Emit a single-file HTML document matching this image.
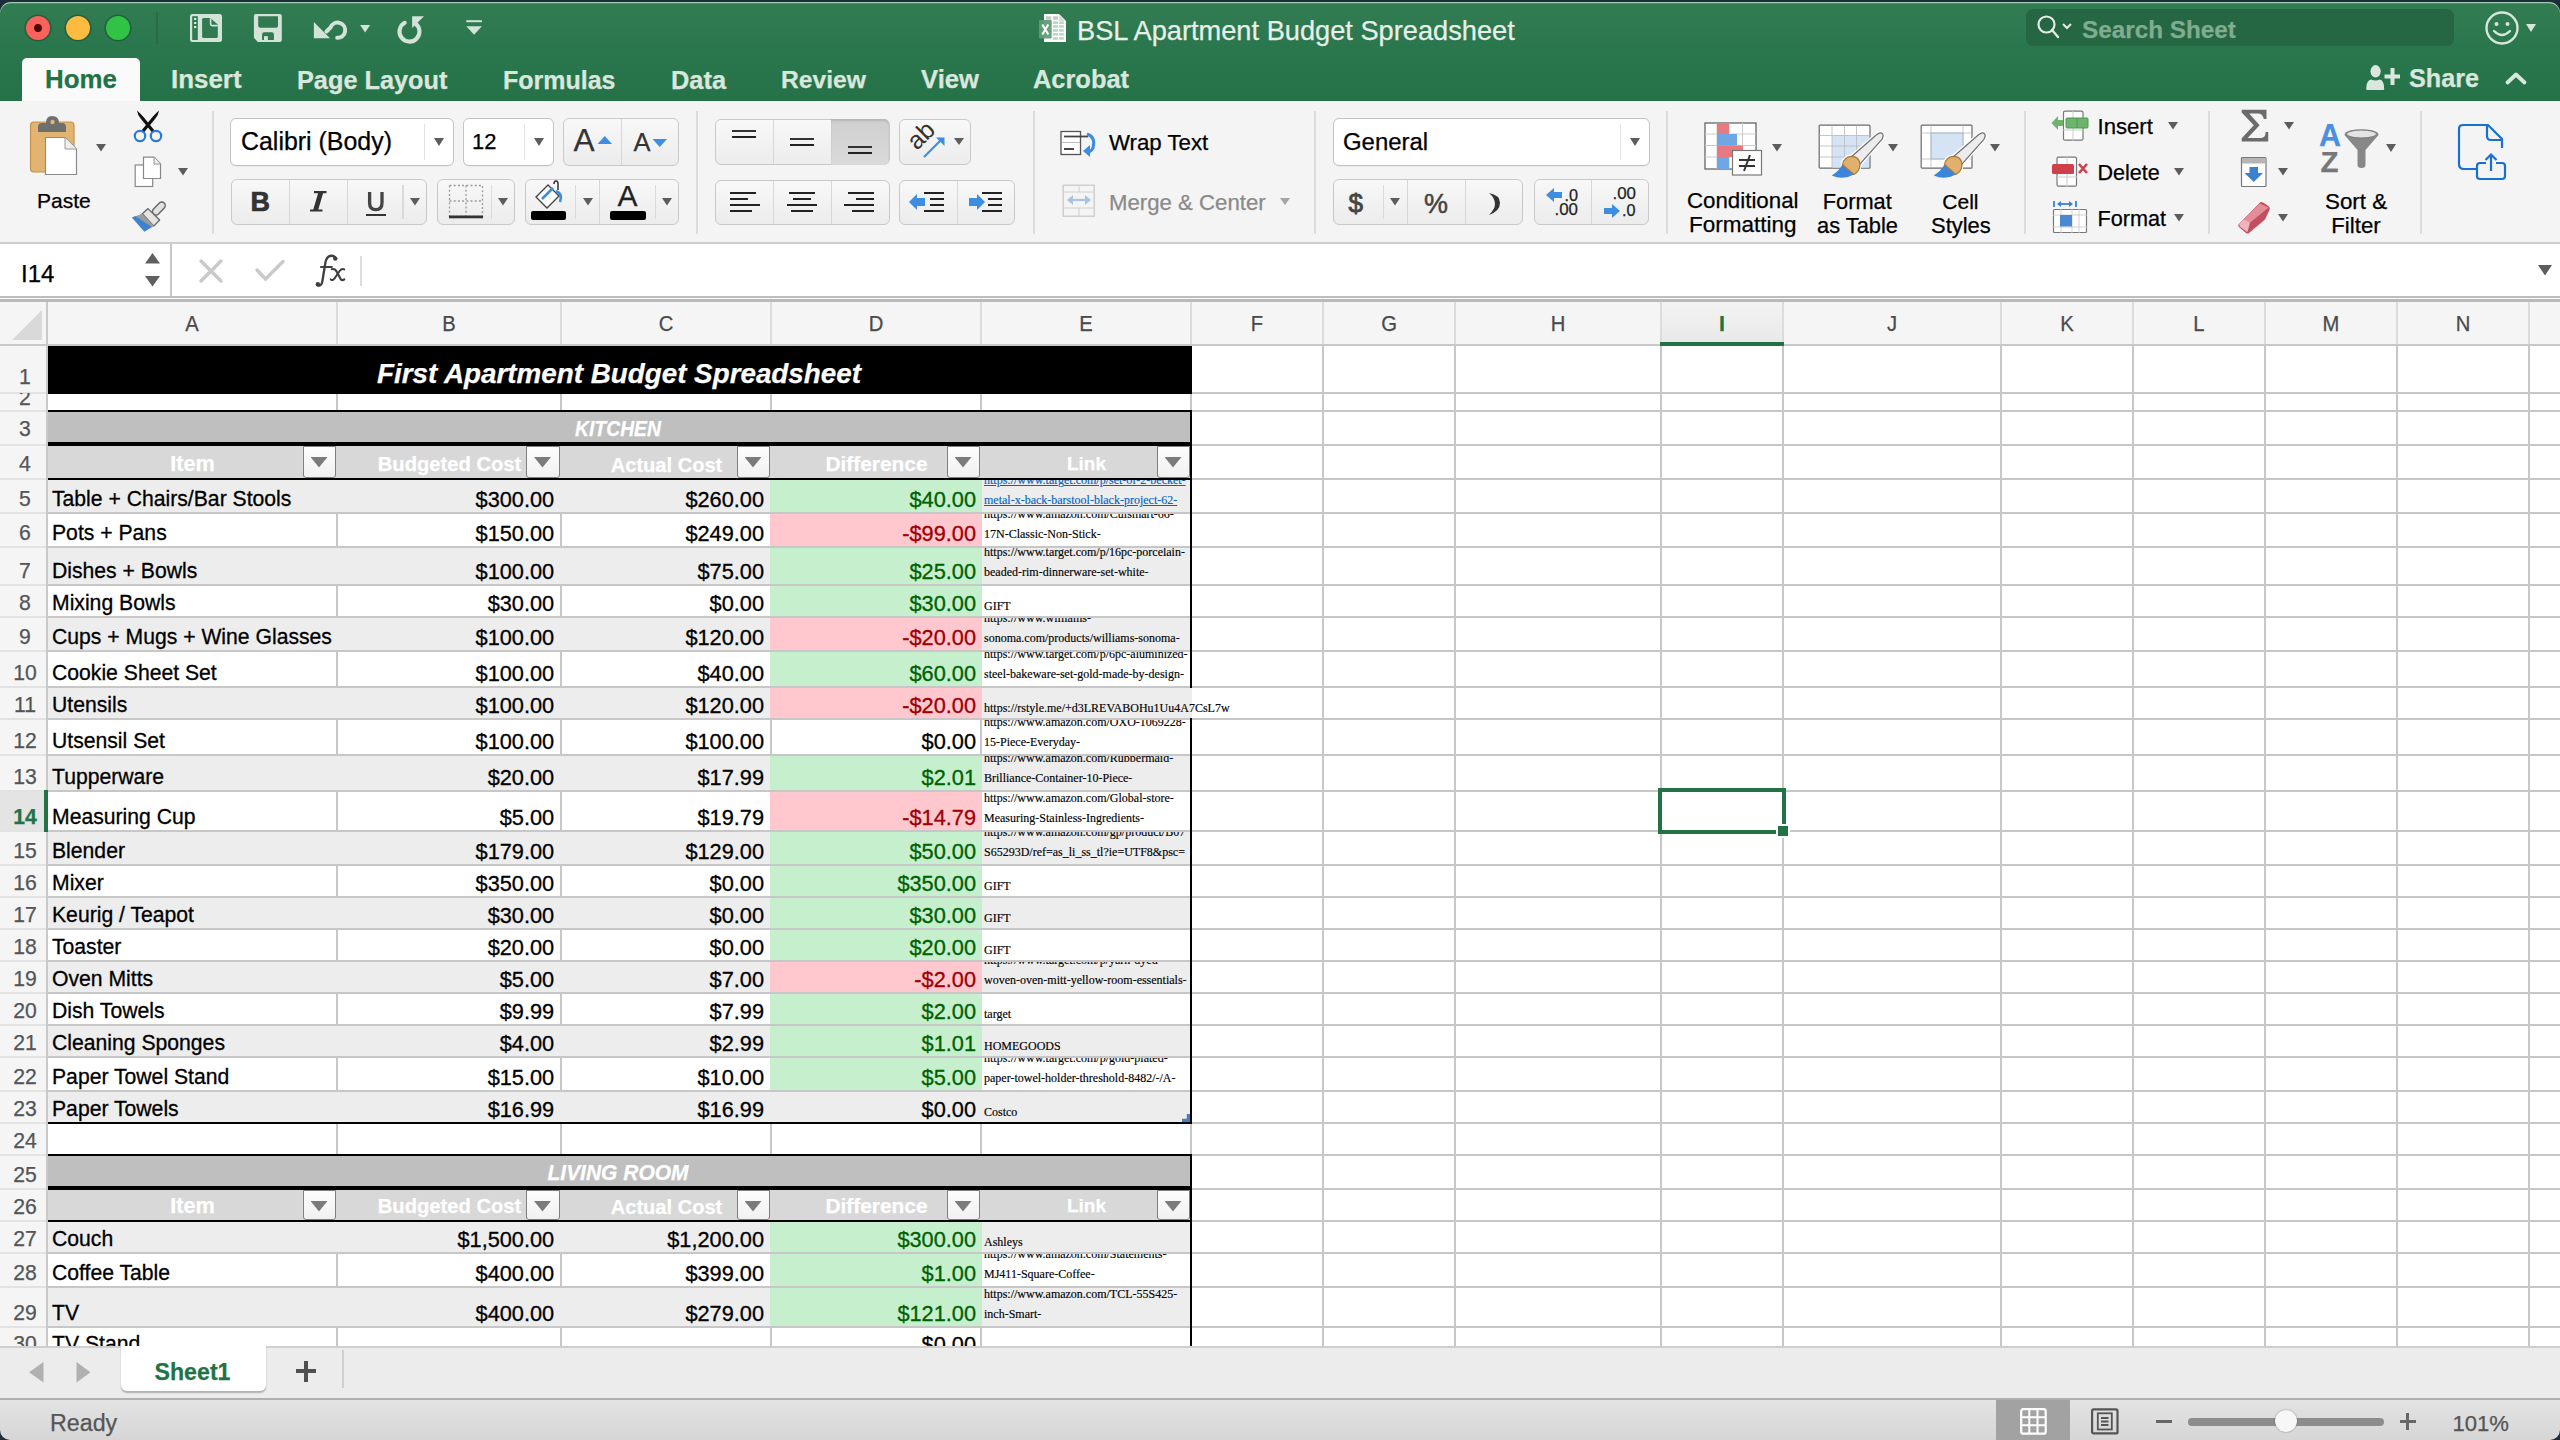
<!DOCTYPE html><html><head><meta charset="utf-8"><style>*{margin:0;padding:0}html,body{width:2560px;height:1440px;overflow:hidden;background:#1c2e3b}
body{position:relative;font-family:"Liberation Sans", sans-serif}
.t{position:absolute;white-space:nowrap;-webkit-text-stroke:0.25px currentColor}
.r{position:absolute}
.s{position:absolute;overflow:visible}</style></head><body><div class="r" style="left:0;top:2px;width:2560px;height:100px;background:linear-gradient(#327c52,#2b774d 45%,#267248);border-radius:11px 11px 0 0;box-shadow:inset 0 1.2px 0 rgba(200,232,212,0.75)"></div><svg class="s" style="left:22.700000000000003px;top:12.8px;" width="30" height="30" viewBox="0 0 30 30"><circle cx="15" cy="15" r="12.8" fill="#fc625c" stroke="#23603f" stroke-width="1.6"/></svg><svg class="s" style="left:62.599999999999994px;top:12.8px;" width="30" height="30" viewBox="0 0 30 30"><circle cx="15" cy="15" r="12.8" fill="#fdbc40" stroke="#23603f" stroke-width="1.6"/></svg><svg class="s" style="left:102.8px;top:12.8px;" width="30" height="30" viewBox="0 0 30 30"><circle cx="15" cy="15" r="12.8" fill="#30c346" stroke="#23603f" stroke-width="1.6"/></svg><svg class="s" style="left:32.7px;top:22.8px;" width="10" height="10" viewBox="0 0 10 10"><circle cx="5" cy="5" r="3.9" fill="#4d0404"/></svg><div class="r" style="left:156px;top:12px;width:2px;height:32px;background:#2a6b45;"></div><svg class="s" style="left:0px;top:0px;" width="520" height="60" viewBox="0 0 520 60"><rect x="190" y="14" width="32" height="28" rx="2.5" fill="#d3e3d8"/><rect x="192.2" y="16.2" width="5.6" height="23.8" fill="#2f7a50"/><rect x="194.2" y="18" width="2" height="2" fill="#fff"/><rect x="194.2" y="22" width="2" height="2" fill="#fff"/><rect x="194.2" y="26" width="2" height="2" fill="#fff"/><path d="M203.5 18.1H210.2L217.8 24.6V36.4Q217.8 37.9 216.3 37.9H203.6Q202.1 37.9 202.1 36.4V19.6Q202.1 18.1 203.5 18.1Z" fill="#2f7a50"/><path d="M210.6 18.3V24Q210.6 25.6 212.2 25.6H217.8" fill="none" stroke="#d3e3d8" stroke-width="1.6"/><path d="M256 14H279.8Q281.8 14 281.8 16V40Q281.8 42 279.8 42H257.8L253.9 37.7V16Q253.9 14 256 14Z" fill="#d3e3d8"/><path d="M258.2 16.2H278V25.8Q278 27.8 276 27.8H260.2Q258.2 27.8 258.2 25.8Z" fill="#2f7a50"/><path d="M262.1 40V34.3Q262.1 32.3 264.1 32.3H271.9Q273.9 32.3 273.9 34.3V40Z" fill="#2f7a50"/><rect x="264" y="36.1" width="3.9" height="3.9" fill="#d3e3d8"/><path d="M313.9 22V38.2H330Z" fill="#d3e3d8"/><path d="M326.5 31.5L330.5 27.5A7.6 7.6 0 1 1 337.2 37.8" fill="none" stroke="#d3e3d8" stroke-width="4" stroke-linecap="round"/><path d="M360.1 25.1H370.2L365.1 32.5Z" fill="#d3e3d8"/><path d="M404.7 22.8A10 10 0 1 0 415.5 23.6" fill="none" stroke="#d3e3d8" stroke-width="4.1" stroke-linecap="round"/><path d="M412.1 16.2H424L412.1 28Z" fill="#d3e3d8"/><rect x="466.3" y="20.2" width="15.6" height="2" fill="#d3e3d8"/><path d="M466.3 26.2H481.9L474.1 34.7Z" fill="#d3e3d8"/></svg><svg class="s" style="left:1038px;top:13px;" width="30" height="31" viewBox="0 0 30 31"><path d="M6 1H21L28 8V29H6Z" fill="#fff"/><path d="M21 1V8H28Z" fill="#dcdcdc"/><rect x="8" y="3.3" width="5.3" height="3.5" fill="#c8c8c8"/><rect x="15" y="3.3" width="5" height="3.5" fill="#c8c8c8"/><rect x="15" y="8.4" width="5" height="2.5" fill="#b3dabb"/><rect x="21.1" y="8.4" width="4.7" height="2.5" fill="#b3dabb"/><rect x="15" y="12.2" width="5" height="2.5" fill="#b3dabb"/><rect x="21.1" y="12.2" width="4.7" height="2.5" fill="#b3dabb"/><rect x="15" y="16.2" width="5" height="2.5" fill="#b3dabb"/><rect x="21.1" y="16.2" width="4.7" height="2.5" fill="#b3dabb"/><rect x="15" y="20.1" width="5" height="2.5" fill="#b3dabb"/><rect x="21.1" y="20.1" width="4.7" height="2.5" fill="#b3dabb"/><rect x="15" y="24.2" width="5" height="2.5" fill="#b3dabb"/><rect x="21.1" y="24.2" width="4.7" height="2.5" fill="#b3dabb"/><rect x="1" y="7" width="12.7" height="18.6" rx="1" fill="#5f9c76" opacity="0.95"/><path d="M4.3 11.5L10.3 21.5M10.3 11.5L4.3 21.5" stroke="#fff" stroke-width="2.1"/></svg><div class="t" style="left:1077px;top:16.95px;font-size:27.23px;line-height:27.23px;color:#e6efe9;">BSL Apartment Budget Spreadsheet</div><div class="r" style="left:2026px;top:9px;width:428px;height:37px;background:#256643;border-radius:7px;"></div><svg class="s" style="left:2036px;top:14px;" width="40" height="26" viewBox="0 0 40 26"><circle cx="10.5" cy="10.5" r="8" fill="none" stroke="#e3ede6" stroke-width="2.2"/><path d="M16 16L22 23" stroke="#e3ede6" stroke-width="2.4" stroke-linecap="round"/><path d="M27 10L31 14L35 10" fill="none" stroke="#e3ede6" stroke-width="2"/></svg><div class="t" style="left:2082px;top:18.42px;font-size:24.31px;line-height:24.31px;color:#80ad90;font-weight:700;">Search Sheet</div><svg class="s" style="left:2484px;top:10px;" width="36" height="36" viewBox="0 0 36 36"><circle cx="18" cy="18" r="15.5" fill="none" stroke="#d6e6db" stroke-width="2.4"/><circle cx="12.5" cy="14" r="2" fill="#d6e6db"/><circle cx="23.5" cy="14" r="2" fill="#d6e6db"/><path d="M10 21Q18 29 26 21" fill="none" stroke="#d6e6db" stroke-width="2.4" stroke-linecap="round"/></svg><svg class="s" style="left:2526.0px;top:24.0px;" width="10" height="8" viewBox="0 0 10 8"><path d="M0 0H10L5.0 8Z" fill="#d6e6db"/></svg><div class="r" style="left:22px;top:58px;width:118px;height:44px;background:#fafafa;border-radius:5px 5px 0 0"></div><div class="t" style="left:45px;top:67.06px;font-size:25.92px;line-height:25.92px;color:#217346;font-weight:700;">Home</div><div class="t" style="left:171px;top:67.05px;font-size:25.93px;line-height:25.93px;color:#d9e7de;font-weight:700;">Insert</div><div class="t" style="left:297px;top:67.58px;font-size:25.31px;line-height:25.31px;color:#d9e7de;font-weight:700;">Page Layout</div><div class="t" style="left:503px;top:67.84px;font-size:25.0px;line-height:25.0px;color:#d9e7de;font-weight:700;">Formulas</div><div class="t" style="left:671px;top:67.52px;font-size:25.38px;line-height:25.38px;color:#d9e7de;font-weight:700;">Data</div><div class="t" style="left:781px;top:68.12px;font-size:24.67px;line-height:24.67px;color:#d9e7de;font-weight:700;">Review</div><div class="t" style="left:921px;top:67.28px;font-size:25.66px;line-height:25.66px;color:#d9e7de;font-weight:700;">View</div><div class="t" style="left:1033px;top:67.49px;font-size:25.41px;line-height:25.41px;color:#d9e7de;font-weight:700;">Acrobat</div><svg class="s" style="left:2364px;top:63px;" width="38" height="28" viewBox="0 0 38 28"><ellipse cx="11.6" cy="8.3" rx="5.1" ry="6.2" fill="#d9e7de"/><path d="M2.2 26Q2.2 17.5 7 16.5Q11.6 18.5 16 16.5Q20.2 17.5 20.2 26Q20.2 26.9 19.2 26.9H3.2Q2.2 26.9 2.2 26Z" fill="#d9e7de"/><path d="M28.5 5V22M20.5 13.4H36" stroke="#d9e7de" stroke-width="4"/></svg><div class="t" style="left:2409px;top:66.18px;font-size:25.19px;line-height:25.19px;color:#d9e7de;font-weight:700;">Share</div><svg class="s" style="left:2504px;top:70px;" width="24" height="16" viewBox="0 0 24 16"><path d="M3.5 12.5L12 4.5L20.5 12.5" fill="none" stroke="#d9e7de" stroke-width="3.8" stroke-linecap="round" stroke-linejoin="round"/></svg><div class="r" style="left:0px;top:101px;width:2560px;height:141px;background:#f4f4f4;"></div><div class="r" style="left:0px;top:242px;width:2560px;height:2px;background:#cdcdcd;"></div><svg class="s" style="left:28px;top:114px;" width="52" height="64" viewBox="0 0 52 64"><rect x="2.5" y="8" width="43.5" height="50" rx="3.5" fill="#e2b472" stroke="#c5914a" stroke-width="1.2"/><path d="M10 18V13Q10 9 14 9H18Q18 2 24 2Q31 2 31 9H34Q38 9 38 13V18Z" fill="#6f6f6f"/><circle cx="24.5" cy="8" r="2.2" fill="#e2b472"/><path d="M17.5 23.5H37L48.5 35V60.5H17.5Z" fill="#fff" stroke="#8b8b8b" stroke-width="1.2"/><path d="M37 23.5V35H48.5" fill="#eee" stroke="#9a9a9a" stroke-width="1"/></svg><svg class="s" style="left:96.0px;top:143.75px;" width="10" height="7.5" viewBox="0 0 10 7.5"><path d="M0 0H10L5.0 7.5Z" fill="#5d5d5d"/></svg><div class="t" style="left:37px;top:189.89px;font-size:21.04px;line-height:21.04px;color:#000;">Paste</div><svg class="s" style="left:132px;top:108px;" width="32" height="36" viewBox="0 0 32 36"><path d="M5 2.5Q5.5 7 9 11L20.5 25L23 23L11.5 9Q8 5 5 2.5Z" fill="#111"/><path d="M27 2.5Q26.5 7 23 11L11.5 25L9 23L20.5 9Q24 5 27 2.5Z" fill="#111"/><circle cx="8" cy="28" r="5.2" fill="#f4f4f4" stroke="#2a7ad6" stroke-width="2.2"/><circle cx="24" cy="28" r="5.2" fill="#f4f4f4" stroke="#2a7ad6" stroke-width="2.2"/></svg><svg class="s" style="left:134px;top:156px;" width="28" height="32" viewBox="0 0 28 32"><rect x="1.2" y="9" width="17.5" height="21.5" fill="#fff" stroke="#888" stroke-width="1.2"/><path d="M9.5 1.2H20L26.5 7.8V22.5H9.5Z" fill="#fff" stroke="#888" stroke-width="1.2"/><path d="M20 1.2V8H26.5" fill="#eee" stroke="#999" stroke-width="1"/></svg><svg class="s" style="left:178.0px;top:167.55px;" width="10" height="7.5" viewBox="0 0 10 7.5"><path d="M0 0H10L5.0 7.5Z" fill="#5d5d5d"/></svg><svg class="s" style="left:0px;top:0px;" width="200" height="240" viewBox="0 0 200 240"><path d="M156 211.5L161.8 205.5" stroke="#6a6a6a" stroke-width="8.4" stroke-linecap="round"/><path d="M156 211.5L161.8 205.5" stroke="#e2e2e2" stroke-width="5.4" stroke-linecap="round"/><path d="M148 208.6L159.6 220L153.8 226.1L142.3 213.8Z" fill="#e4e4e4" stroke="#666" stroke-width="1.3" stroke-linejoin="round"/><path d="M142.3 213.8L153.8 226.1L151.5 227.5L135.5 216.2Z" fill="#9c9c9c"/><path d="M131.8 217.6L135.5 216L152 227L144.4 231.8Z" fill="#3f82d0"/></svg><div class="r" style="left:212px;top:111px;width:2px;height:123px;background:#dcdcdc;"></div><div class="r" style="left:230px;top:118px;width:223.5px;height:47.5px;background:#fff;border:1.5px solid #c3c3c3;box-sizing:border-box;border-radius:6px;box-shadow:0 1px 0 rgba(0,0,0,0.04)"></div><div class="r" style="left:424px;top:124px;width:1px;height:35.5px;background:#e2e2e2;"></div><svg class="s" style="left:434.0px;top:138.0px;" width="10" height="8" viewBox="0 0 10 8"><path d="M0 0H10L5.0 8Z" fill="#5d5d5d"/></svg><div class="t" style="left:241px;top:128.90px;font-size:24.93px;line-height:24.93px;color:#000;">Calibri (Body)</div><div class="r" style="left:462.5px;top:118px;width:91.0px;height:47.5px;background:#fff;border:1.5px solid #c3c3c3;box-sizing:border-box;border-radius:6px;box-shadow:0 1px 0 rgba(0,0,0,0.04)"></div><div class="r" style="left:524px;top:124px;width:1px;height:35.5px;background:#e2e2e2;"></div><svg class="s" style="left:534.0px;top:138.0px;" width="10" height="8" viewBox="0 0 10 8"><path d="M0 0H10L5.0 8Z" fill="#5d5d5d"/></svg><div class="t" style="left:472px;top:131.43px;font-size:21.94px;line-height:21.94px;color:#000;">12</div><div class="r" style="left:563px;top:118px;width:116px;height:47.5px;background:linear-gradient(#f8f8f8,#ececec);border:1.5px solid #c9c9c9;box-sizing:border-box;border-radius:6px"></div><div class="r" style="left:620.5px;top:119px;width:1.5px;height:45.5px;background:#d6d6d6;"></div><div class="t" style="left:573.5px;top:125.23px;font-size:31.63px;line-height:31.63px;color:#333;">A</div><svg class="s" style="left:597px;top:135px;" width="16" height="10" viewBox="0 0 16 10"><path d="M0.5 9H15L7.75 1Z" fill="#3d8ee0"/></svg><div class="t" style="left:633.5px;top:129.92px;font-size:25.49px;line-height:25.49px;color:#333;">A</div><svg class="s" style="left:652px;top:138px;" width="16" height="10" viewBox="0 0 16 10"><path d="M0.5 1H15L7.75 9Z" fill="#3d8ee0"/></svg><div class="r" style="left:231px;top:179px;width:196px;height:46px;background:linear-gradient(#f8f8f8,#ececec);border:1.5px solid #c9c9c9;box-sizing:border-box;border-radius:6px"></div><div class="r" style="left:288.5px;top:180px;width:1.5px;height:44px;background:#d6d6d6;"></div><div class="r" style="left:346.5px;top:180px;width:1.5px;height:44px;background:#d6d6d6;"></div><div class="r" style="left:402.0px;top:185px;width:1.5px;height:34px;background:#dadada;"></div><div class="t" style="left:250.5px;top:188.94px;font-size:27px;line-height:27px;color:#333;font-weight:700;-webkit-text-stroke:0.7px #333;">B</div><svg class="s" style="left:300px;top:185px;" width="30" height="30" viewBox="0 0 30 30"><path d="M14 7.2H26.5M10 25.5H22.5" stroke="#333" stroke-width="2.2" fill="none"/><path d="M18.3 7.5H23.3L18 25.5H13Z" fill="#333"/></svg><svg class="s" style="left:360px;top:185px;" width="30" height="30" viewBox="0 0 30 30"><path d="M9.6 7V18Q9.6 24.6 15.8 24.6Q22 24.6 22 18V7" stroke="#444" stroke-width="3.3" fill="none"/></svg><div class="r" style="left:366px;top:213.7px;width:20px;height:2.1000000000000227px;background:#333;"></div><svg class="s" style="left:410.0px;top:197.75px;" width="10" height="7.5" viewBox="0 0 10 7.5"><path d="M0 0H10L5.0 7.5Z" fill="#5d5d5d"/></svg><div class="r" style="left:437px;top:179px;width:78px;height:46px;background:linear-gradient(#f8f8f8,#ececec);border:1.5px solid #c9c9c9;box-sizing:border-box;border-radius:6px"></div><div class="r" style="left:490.5px;top:185px;width:1.5px;height:34px;background:#dadada;"></div><svg class="s" style="left:448px;top:184px;" width="36" height="36" viewBox="0 0 36 36"><g stroke="#9a9a9a" stroke-width="1.3" stroke-dasharray="2 2.2" fill="none"><rect x="1.5" y="1.5" width="33" height="31"/><path d="M18 1.5V32M1.5 17H34.5"/></g><rect x="1" y="31.5" width="34" height="2.8" fill="#333"/></svg><svg class="s" style="left:498.0px;top:197.75px;" width="10" height="7.5" viewBox="0 0 10 7.5"><path d="M0 0H10L5.0 7.5Z" fill="#5d5d5d"/></svg><div class="r" style="left:525px;top:179px;width:154px;height:46px;background:linear-gradient(#f8f8f8,#ececec);border:1.5px solid #c9c9c9;box-sizing:border-box;border-radius:6px"></div><div class="r" style="left:598.5px;top:180px;width:1.5px;height:44px;background:#d6d6d6;"></div><div class="r" style="left:574.5px;top:185px;width:1.5px;height:34px;background:#dadada;"></div><div class="r" style="left:654.5px;top:185px;width:1.5px;height:34px;background:#dadada;"></div><svg class="s" style="left:532px;top:180px;" width="32" height="30" viewBox="0 0 32 30"><path d="M22 4Q22 1 24 1Q26 1 26 4V10" fill="none" stroke="#333" stroke-width="1.5"/><path d="M4 17L16 5L27 16L15 28Z" fill="#fff" stroke="#444" stroke-width="1.4"/><path d="M10 19L21 8" stroke="#3d8ee0" stroke-width="2.6"/><path d="M24 11Q31 14 28 22" fill="none" stroke="#3d8ee0" stroke-width="2.6"/></svg><div class="r" style="left:530.5px;top:210.5px;width:35.5px;height:9.300000000000011px;background:#000;border-radius:2px;"></div><svg class="s" style="left:582.5px;top:197.75px;" width="10" height="7.5" viewBox="0 0 10 7.5"><path d="M0 0H10L5.0 7.5Z" fill="#5d5d5d"/></svg><div class="t" style="left:617.5px;top:180.62px;font-size:29.98px;line-height:29.98px;color:#222;">A</div><div class="r" style="left:610px;top:210.5px;width:36px;height:9.300000000000011px;background:#000;border-radius:2px;"></div><svg class="s" style="left:662.0px;top:197.75px;" width="10" height="7.5" viewBox="0 0 10 7.5"><path d="M0 0H10L5.0 7.5Z" fill="#5d5d5d"/></svg><div class="r" style="left:696px;top:111px;width:2px;height:123px;background:#dcdcdc;"></div><div class="r" style="left:715px;top:118.5px;width:174.5px;height:46.5px;background:linear-gradient(#f8f8f8,#ececec);border:1.5px solid #c9c9c9;box-sizing:border-box;border-radius:6px"></div><div class="r" style="left:772.5px;top:119.5px;width:1.5px;height:44.5px;background:#d6d6d6;"></div><div class="r" style="left:830.5px;top:119.5px;width:1.5px;height:44.5px;background:#d6d6d6;"></div><div class="r" style="left:831px;top:119px;width:58px;height:45.5px;background:linear-gradient(#cfcfcf,#dadada);border-radius:0 5px 5px 0;box-shadow:inset 0 2px 2px rgba(0,0,0,0.12)"></div><div class="r" style="left:732px;top:130px;width:24px;height:2px;background:#333;"></div><div class="r" style="left:732px;top:136px;width:24px;height:2px;background:#222;"></div><div class="r" style="left:790px;top:138px;width:24px;height:2px;background:#333;"></div><div class="r" style="left:790px;top:144px;width:24px;height:2px;background:#222;"></div><div class="r" style="left:848px;top:145.5px;width:24px;height:2.0px;background:#333;"></div><div class="r" style="left:848px;top:151.5px;width:24px;height:2.0px;background:#222;"></div><div class="r" style="left:899px;top:118.5px;width:71.5px;height:46.5px;background:linear-gradient(#f8f8f8,#ececec);border:1.5px solid #c9c9c9;box-sizing:border-box;border-radius:6px"></div><svg class="s" style="left:906px;top:122px;" width="56" height="40" viewBox="0 0 56 40"><text x="0" y="0" transform="translate(11,29) rotate(-45)" font-family="Liberation Sans" font-size="25" fill="#333">ab</text><path d="M18 35L36 17" stroke="#3d8ee0" stroke-width="2.2"/><path d="M30 15.5H38.5V24Z" fill="#3d8ee0"/></svg><svg class="s" style="left:953.8px;top:138.0px;" width="10" height="7" viewBox="0 0 10 7"><path d="M0 0H10L5.0 7Z" fill="#5d5d5d"/></svg><div class="r" style="left:715px;top:179.5px;width:174.5px;height:45.0px;background:linear-gradient(#f8f8f8,#ececec);border:1.5px solid #c9c9c9;box-sizing:border-box;border-radius:6px"></div><div class="r" style="left:772.5px;top:180.5px;width:1.5px;height:43.0px;background:#d6d6d6;"></div><div class="r" style="left:830.5px;top:180.5px;width:1.5px;height:43.0px;background:#d6d6d6;"></div><div class="r" style="left:730px;top:192px;width:26px;height:2px;background:#222;"></div><div class="r" style="left:789.0px;top:192px;width:26.0px;height:2px;background:#222;"></div><div class="r" style="left:848px;top:192px;width:26px;height:2px;background:#222;"></div><div class="r" style="left:730px;top:198px;width:18px;height:2px;background:#222;"></div><div class="r" style="left:793.0px;top:198px;width:18.0px;height:2px;background:#222;"></div><div class="r" style="left:856px;top:198px;width:18px;height:2px;background:#222;"></div><div class="r" style="left:730px;top:204px;width:30px;height:2px;background:#222;"></div><div class="r" style="left:787.0px;top:204px;width:30.0px;height:2px;background:#222;"></div><div class="r" style="left:844px;top:204px;width:30px;height:2px;background:#222;"></div><div class="r" style="left:730px;top:210px;width:22px;height:2px;background:#222;"></div><div class="r" style="left:791.0px;top:210px;width:22.0px;height:2px;background:#222;"></div><div class="r" style="left:852px;top:210px;width:22px;height:2px;background:#222;"></div><div class="r" style="left:899px;top:179.5px;width:115.5px;height:45.0px;background:linear-gradient(#f8f8f8,#ececec);border:1.5px solid #c9c9c9;box-sizing:border-box;border-radius:6px"></div><div class="r" style="left:956.5px;top:180.5px;width:1.5px;height:43.0px;background:#d6d6d6;"></div><svg class="s" style="left:908px;top:192px;" width="20" height="20" viewBox="0 0 20 20"><path d="M1 9L9 1V5H17V13H9V17Z" fill="#3d8ee0" transform="translate(0,1)"/></svg><svg class="s" style="left:966px;top:192px;" width="20" height="20" viewBox="0 0 20 20"><path d="M19 9L11 1V5H3V13H11V17Z" fill="#3d8ee0" transform="translate(0,1)"/></svg><div class="r" style="left:924px;top:192px;width:20px;height:2px;background:#222;"></div><div class="r" style="left:982px;top:192px;width:20px;height:2px;background:#222;"></div><div class="r" style="left:930px;top:198px;width:14px;height:2px;background:#222;"></div><div class="r" style="left:988px;top:198px;width:14px;height:2px;background:#222;"></div><div class="r" style="left:930px;top:204px;width:14px;height:2px;background:#222;"></div><div class="r" style="left:988px;top:204px;width:14px;height:2px;background:#222;"></div><div class="r" style="left:924px;top:210px;width:20px;height:2px;background:#222;"></div><div class="r" style="left:982px;top:210px;width:20px;height:2px;background:#222;"></div><div class="r" style="left:1033px;top:111px;width:2px;height:123px;background:#dcdcdc;"></div><svg class="s" style="left:1060px;top:129px;" width="42" height="29" viewBox="0 0 42 29"><rect x="1" y="2.5" width="19.5" height="23" fill="#fff" stroke="#555" stroke-width="1.3"/><path d="M4 7.5H28" stroke="#444" stroke-width="1.8"/><path d="M2 13.5H20" stroke="#bbb" stroke-width="1"/><path d="M4 20H14" stroke="#333" stroke-width="1.8"/><path d="M27 5Q36 8 33 19Q31 23 27 23" fill="none" stroke="#3d8ee0" stroke-width="3"/><path d="M23 22L30 16V28Z" fill="#3d8ee0"/></svg><div class="t" style="left:1109px;top:132.17px;font-size:22.24px;line-height:22.24px;color:#000;">Wrap Text</div><svg class="s" style="left:1062px;top:184px;" width="34" height="34" viewBox="0 0 34 34"><rect x="1.2" y="1.2" width="31" height="31" fill="none" stroke="#c6c6c6" stroke-width="1.2"/><path d="M1 8H32M1 24H32M17 1V8M17 24V33" stroke="#d0d0d0" stroke-width="1"/><path d="M6 16H28" stroke="#a9c3e3" stroke-width="2.2"/><path d="M5 16L11 11V21ZM29 16L23 11V21Z" fill="#a9c3e3"/></svg><div class="t" style="left:1109px;top:192.22px;font-size:22.19px;line-height:22.19px;color:#8a8a8a;">Merge &amp; Center</div><svg class="s" style="left:1280.0px;top:198.3px;" width="10" height="7" viewBox="0 0 10 7"><path d="M0 0H10L5.0 7Z" fill="#a6a6a6"/></svg><div class="r" style="left:1314px;top:111px;width:2px;height:123px;background:#dcdcdc;"></div><div class="r" style="left:1332.5px;top:118px;width:317.0px;height:47.5px;background:#fff;border:1.5px solid #c3c3c3;box-sizing:border-box;border-radius:6px;box-shadow:0 1px 0 rgba(0,0,0,0.04)"></div><div class="r" style="left:1620px;top:124px;width:1px;height:35.5px;background:#e2e2e2;"></div><svg class="s" style="left:1630.0px;top:138.0px;" width="10" height="8" viewBox="0 0 10 8"><path d="M0 0H10L5.0 8Z" fill="#5d5d5d"/></svg><div class="t" style="left:1343px;top:130.03px;font-size:23.95px;line-height:23.95px;color:#000;">General</div><div class="r" style="left:1333px;top:179px;width:189.5px;height:46px;background:linear-gradient(#f8f8f8,#ececec);border:1.5px solid #c9c9c9;box-sizing:border-box;border-radius:6px"></div><div class="r" style="left:1406.5px;top:180px;width:1.5px;height:44px;background:#d6d6d6;"></div><div class="r" style="left:1464.5px;top:180px;width:1.5px;height:44px;background:#d6d6d6;"></div><div class="r" style="left:1382.5px;top:185px;width:1.5px;height:34px;background:#dadada;"></div><div class="t" style="left:1348.5px;top:190.43px;font-size:26.07px;line-height:26.07px;color:#444;-webkit-text-stroke:0.8px #444;">$</div><svg class="s" style="left:1390.0px;top:197.95px;" width="10" height="7.5" viewBox="0 0 10 7.5"><path d="M0 0H10L5.0 7.5Z" fill="#5d5d5d"/></svg><div class="t" style="left:1424px;top:190.65px;font-size:26.99px;line-height:26.99px;color:#444;-webkit-text-stroke:0.5px #444;">%</div><svg class="s" style="left:1485px;top:191px;" width="18" height="25" viewBox="0 0 18 25"><path d="M4 2Q15 4 15 12Q15 20 4 24Q10 18 10 13Q10 7 4 2Z" fill="#333"/></svg><div class="r" style="left:1533.5px;top:179px;width:115.5px;height:46px;background:linear-gradient(#f8f8f8,#ececec);border:1.5px solid #c9c9c9;box-sizing:border-box;border-radius:6px"></div><div class="r" style="left:1590.5px;top:180px;width:1.5px;height:44px;background:#d6d6d6;"></div><svg class="s" style="left:1545px;top:187px;" width="18" height="16" viewBox="0 0 18 16"><path d="M1 8L9 1V5H17V11H9V15Z" fill="#3d8ee0"/></svg><div class="t" style="left:1564.5px;top:186.80px;font-size:16.19px;line-height:16.19px;color:#222;">.0</div><div class="t" style="left:1554.5px;top:201.69px;font-size:16.91px;line-height:16.91px;color:#222;">.00</div><div class="t" style="left:1612.5px;top:186.19px;font-size:16.91px;line-height:16.91px;color:#222;">.00</div><svg class="s" style="left:1603px;top:203px;" width="18" height="16" viewBox="0 0 18 16"><path d="M17 8L9 1V5H1V11H9V15Z" fill="#3d8ee0"/></svg><div class="t" style="left:1622px;top:202.30px;font-size:16.19px;line-height:16.19px;color:#222;">.0</div><div class="r" style="left:1666px;top:111px;width:2px;height:123px;background:#dcdcdc;"></div><svg class="s" style="left:1704px;top:122px;" width="60" height="56" viewBox="0 0 60 56"><rect x="1" y="1" width="51" height="46" fill="#fff" stroke="#666" stroke-width="1.3"/><path d="M13 1V47" stroke="#ccc" stroke-width="1"/><path d="M25 1V47" stroke="#ccc" stroke-width="1"/><path d="M38.5 1V47" stroke="#ccc" stroke-width="1"/><path d="M1 12H52" stroke="#ccc" stroke-width="1"/><path d="M1 23.5H52" stroke="#ccc" stroke-width="1"/><path d="M1 35H52" stroke="#ccc" stroke-width="1"/><rect x="13" y="1" width="12" height="11" fill="#e8797e"/><rect x="13" y="12" width="20" height="11.5" fill="#6ea6e6"/><rect x="13" y="23.5" width="26" height="11.5" fill="#e8797e"/><rect x="13" y="35" width="12" height="12" fill="#6ea6e6"/><rect x="28.5" y="28.5" width="29" height="24.5" fill="#fff" stroke="#777" stroke-width="1.2"/><path d="M35 38H51M35 44H51M46 33L40 49" stroke="#333" stroke-width="2"/></svg><svg class="s" style="left:1772.0px;top:143.95px;" width="10" height="7.5" viewBox="0 0 10 7.5"><path d="M0 0H10L5.0 7.5Z" fill="#5d5d5d"/></svg><div class="t" style="left:1687px;top:190.13px;font-size:22.29px;line-height:22.29px;color:#000;">Conditional</div><div class="t" style="left:1689px;top:214.46px;font-size:22.49px;line-height:22.49px;color:#000;">Formatting</div><svg class="s" style="left:1818px;top:124px;" width="70" height="62" viewBox="0 0 70 62"><rect x="1.2" y="1.2" width="50.8" height="43" rx="1" fill="#fff" stroke="#6a6a6a" stroke-width="1.2"/><rect x="14" y="11.5" width="37" height="32" fill="#d5e4f5"/><path d="M14 1.5V44" stroke="#b9b9b9" stroke-width="0.8"/><path d="M26.5 1.5V44" stroke="#b9b9b9" stroke-width="0.8"/><path d="M38.5 1.5V44" stroke="#b9b9b9" stroke-width="0.8"/><path d="M1.5 11.5H52" stroke="#b9b9b9" stroke-width="0.8"/><path d="M1.5 22H52" stroke="#b9b9b9" stroke-width="0.8"/><path d="M1.5 33H52" stroke="#b9b9b9" stroke-width="0.8"/><path d="M28.8 36.7L58.5 10.8Q62.5 7.5 64.6 9.8Q66 12.5 63.5 15.8L37.2 45.3Z" fill="#fff" stroke="#fff" stroke-width="4"/><circle cx="33.1" cy="41.1" r="10.5" fill="#fff"/><path d="M28.8 36.7L58.5 10.8Q62.5 7.5 64.6 9.8Q66 12.5 63.5 15.8L37.2 45.3Z" fill="#ececec" stroke="#6f6f6f" stroke-width="1.2"/><path d="M13.7 51.5Q21 47 24.5 40.5L36 50.5Q25 56.5 13.7 51.5Z" fill="#3b85dc"/><path d="M24.5 40.5Q26 33 33 32.3Q41.9 32.3 41.9 41Q41.9 47 36 50.5Z" fill="#dfb06e" stroke="#a87a3e" stroke-width="1.2"/></svg><svg class="s" style="left:1888.0px;top:143.95px;" width="10" height="7.5" viewBox="0 0 10 7.5"><path d="M0 0H10L5.0 7.5Z" fill="#5d5d5d"/></svg><div class="t" style="left:1822.8px;top:190.55px;font-size:21.79px;line-height:21.79px;color:#000;">Format</div><div class="t" style="left:1817px;top:215.00px;font-size:21.85px;line-height:21.85px;color:#000;">as Table</div><svg class="s" style="left:1920px;top:124px;" width="70" height="62" viewBox="0 0 70 62"><rect x="1.2" y="1.2" width="50.8" height="43" rx="1" fill="#fff" stroke="#6a6a6a" stroke-width="1.2"/><rect x="11" y="9" width="32" height="26" fill="#d5e4f5" stroke="#aac4e8" stroke-width="1"/><path d="M11 1.5V44" stroke="#b9b9b9" stroke-width="0.8"/><path d="M43 1.5V44" stroke="#b9b9b9" stroke-width="0.8"/><path d="M1.5 9H52" stroke="#b9b9b9" stroke-width="0.8"/><path d="M1.5 35H52" stroke="#b9b9b9" stroke-width="0.8"/><path d="M28.8 36.7L58.5 10.8Q62.5 7.5 64.6 9.8Q66 12.5 63.5 15.8L37.2 45.3Z" fill="#fff" stroke="#fff" stroke-width="4"/><circle cx="33.1" cy="41.1" r="10.5" fill="#fff"/><path d="M28.8 36.7L58.5 10.8Q62.5 7.5 64.6 9.8Q66 12.5 63.5 15.8L37.2 45.3Z" fill="#ececec" stroke="#6f6f6f" stroke-width="1.2"/><path d="M13.7 51.5Q21 47 24.5 40.5L36 50.5Q25 56.5 13.7 51.5Z" fill="#3b85dc"/><path d="M24.5 40.5Q26 33 33 32.3Q41.9 32.3 41.9 41Q41.9 47 36 50.5Z" fill="#dfb06e" stroke="#a87a3e" stroke-width="1.2"/></svg><svg class="s" style="left:1990.0px;top:143.95px;" width="10" height="7.5" viewBox="0 0 10 7.5"><path d="M0 0H10L5.0 7.5Z" fill="#5d5d5d"/></svg><div class="t" style="left:1942.3px;top:191.22px;font-size:21.01px;line-height:21.01px;color:#000;">Cell</div><div class="t" style="left:1931px;top:214.91px;font-size:21.96px;line-height:21.96px;color:#000;">Styles</div><div class="r" style="left:2024px;top:111px;width:2px;height:123px;background:#dcdcdc;"></div><svg class="s" style="left:2050px;top:110px;" width="40" height="32" viewBox="0 0 40 32"><rect x="13.5" y="1.2" width="19.5" height="29" rx="1.5" fill="#fff" stroke="#777" stroke-width="1.2"/><path d="M23 1V31M13 20H33" stroke="#ccc" stroke-width="1"/><rect x="16" y="8" width="22" height="10" rx="1" fill="#6db46f" stroke="#4e9a51" stroke-width="1"/><path d="M27 8V18" stroke="#4e9a51" stroke-width="1"/><path d="M1.5 13L8 6V10H13V16H8V20Z" fill="#6db46f"/></svg><div class="t" style="left:2097.5px;top:115.75px;font-size:22.15px;line-height:22.15px;color:#000;">Insert</div><svg class="s" style="left:2168.0px;top:121.75px;" width="10" height="7.5" viewBox="0 0 10 7.5"><path d="M0 0H10L5.0 7.5Z" fill="#5d5d5d"/></svg><svg class="s" style="left:2050px;top:156px;" width="40" height="32" viewBox="0 0 40 32"><rect x="7" y="1.2" width="19.5" height="29" rx="1.5" fill="#fff" stroke="#777" stroke-width="1.2"/><path d="M17 1V31M7 21H27" stroke="#ccc" stroke-width="1"/><rect x="2" y="8" width="22" height="10" rx="1.5" fill="#d0404a"/><path d="M29 8L37 17M37 8L29 17" stroke="#d0404a" stroke-width="2.6"/></svg><div class="t" style="left:2097.5px;top:163.28px;font-size:21.52px;line-height:21.52px;color:#000;">Delete</div><svg class="s" style="left:2174.0px;top:167.75px;" width="10" height="7.5" viewBox="0 0 10 7.5"><path d="M0 0H10L5.0 7.5Z" fill="#5d5d5d"/></svg><svg class="s" style="left:2052px;top:199px;" width="38" height="36" viewBox="0 0 38 36"><path d="M2 2V8M24 2V8" stroke="#3d7fd0" stroke-width="1.8"/><path d="M6 5H20" stroke="#3d7fd0" stroke-width="1.8"/><path d="M5 5L9 2V8ZM21 5L17 2V8Z" fill="#3d7fd0"/><rect x="1.5" y="10.5" width="33" height="23" rx="1" fill="#fff" stroke="#777" stroke-width="1.2"/><path d="M9 10V34M20 10V34M27 10V34M1 16H35M1 28H35" stroke="#ccc" stroke-width="0.9"/><rect x="8" y="16" width="12" height="11.5" fill="#4a88d4"/></svg><div class="t" style="left:2097.5px;top:208.19px;font-size:21.63px;line-height:21.63px;color:#000;">Format</div><svg class="s" style="left:2174.0px;top:214.25px;" width="10" height="7.5" viewBox="0 0 10 7.5"><path d="M0 0H10L5.0 7.5Z" fill="#5d5d5d"/></svg><div class="r" style="left:2208px;top:111px;width:2px;height:123px;background:#dcdcdc;"></div><svg class="s" style="left:0px;top:0px;" width="2300" height="240" viewBox="0 0 2300 240"><path d="M2241.7 109.7H2266.5V119H2263.8Q2262.8 113.4 2258 113.4H2249.2L2259.6 125.2L2247.6 137.9H2261Q2265.6 137.9 2265.6 132H2268.2V141.6H2241.7V138.2L2253.8 125.2L2241.7 112.6Z" fill="#6b6b6b"/><path d="M2238.5 224.5L2259.5 203Q2261 201.5 2263 202.5L2268.5 206Q2270.5 207.5 2269.5 210L2265 219.5L2249 233Q2247.5 234 2246 233L2239.5 227.5Q2237.5 226 2238.5 224.5Z" fill="#c24f5f"/><path d="M2239.2 224.3L2259.6 203.4L2268.6 207.4L2250 222.8Z" fill="#e48e9a"/><path d="M2239.2 224.3L2243.6 219.5L2250 222.8L2247.3 232.2L2239.8 226.6Z" fill="#efb5be"/></svg><svg class="s" style="left:2284.0px;top:121.75px;" width="10" height="7.5" viewBox="0 0 10 7.5"><path d="M0 0H10L5.0 7.5Z" fill="#5d5d5d"/></svg><svg class="s" style="left:2240px;top:156px;" width="28" height="34" viewBox="0 0 28 34"><rect x="1.5" y="1.5" width="24.5" height="29" rx="1" fill="#fff" stroke="#777" stroke-width="1.2"/><rect x="2" y="2" width="23.5" height="5.5" fill="#b4b4b4"/><path d="M9.5 11H18V17H23L13.75 26L4.5 17H9.5Z" fill="#3d7fd0"/></svg><svg class="s" style="left:2278.0px;top:167.75px;" width="10" height="7.5" viewBox="0 0 10 7.5"><path d="M0 0H10L5.0 7.5Z" fill="#5d5d5d"/></svg><svg class="s" style="left:2278.0px;top:214.25px;" width="10" height="7.5" viewBox="0 0 10 7.5"><path d="M0 0H10L5.0 7.5Z" fill="#5d5d5d"/></svg><div class="t" style="left:2319px;top:120.22px;font-size:30.46px;line-height:30.46px;color:#4a90e2;font-weight:700;">A</div><div class="t" style="left:2320.5px;top:147.05px;font-size:29.47px;line-height:29.47px;color:#777;font-weight:700;">Z</div><svg class="s" style="left:2343px;top:128px;" width="40" height="42" viewBox="0 0 40 42"><path d="M1.5 7Q1.5 1.5 18.5 1.5Q35.5 1.5 35.5 7L22.5 22V37Q22.5 40 18.5 40Q14.5 40 14.5 37V22Z" fill="#888"/><ellipse cx="18.5" cy="6" rx="15" ry="4" fill="#e3e3e3" stroke="#777" stroke-width="1"/></svg><svg class="s" style="left:2386.0px;top:143.7px;" width="10" height="8" viewBox="0 0 10 8"><path d="M0 0H10L5.0 8Z" fill="#5d5d5d"/></svg><div class="t" style="left:2325px;top:190.56px;font-size:22.38px;line-height:22.38px;color:#000;">Sort &amp;</div><div class="t" style="left:2331.3px;top:214.68px;font-size:22.23px;line-height:22.23px;color:#000;">Filter</div><div class="r" style="left:2420px;top:111px;width:2px;height:123px;background:#dcdcdc;"></div><svg class="s" style="left:2456px;top:122px;" width="54" height="60" viewBox="0 0 54 60"><path d="M22 47H8Q3 47 3 42V7Q3 3 7 3H32L46 17V26" fill="none" stroke="#1a6fd4" stroke-width="2.2"/><path d="M31 3V14Q31 18 35 18H46" fill="none" stroke="#1a6fd4" stroke-width="2.2"/><path d="M30 41H24Q21 41 21 44V54Q21 57 24 57H46Q49 57 49 54V44Q49 41 46 41H40" fill="none" stroke="#1a6fd4" stroke-width="2.2"/><path d="M35 49V33M29.5 38L35 32.5L40.5 38" fill="none" stroke="#1a6fd4" stroke-width="2.2"/></svg><div class="r" style="left:0px;top:244px;width:2560px;height:52px;background:#fff;"></div><div class="r" style="left:170px;top:244px;width:2px;height:52px;background:#c8c8c8;"></div><div class="t" style="left:21px;top:261.60px;font-size:24.1px;line-height:24.1px;color:#000;">I14</div><svg class="s" style="left:145px;top:253px;" width="16" height="11" viewBox="0 0 16 11"><path d="M0 10.5H15L7.5 0Z" fill="#606060"/></svg><svg class="s" style="left:145px;top:276px;" width="16" height="11" viewBox="0 0 16 11"><path d="M0 0H15L7.5 10.5Z" fill="#606060"/></svg><svg class="s" style="left:198px;top:258px;" width="26" height="26" viewBox="0 0 26 26"><path d="M3 3L23 23M23 3L3 23" stroke="#c9c9c9" stroke-width="3.4" stroke-linecap="round"/></svg><svg class="s" style="left:254px;top:258px;" width="32" height="26" viewBox="0 0 32 26"><path d="M3 12L11.5 21L29 3.5" fill="none" stroke="#c9c9c9" stroke-width="3.4" stroke-linecap="round"/></svg><svg class="s" style="left:300px;top:246px;" width="60" height="50" viewBox="0 0 60 50"><g fill="none" stroke="#3e3e3e" stroke-linecap="round"><path d="M35 11Q31.5 8.5 28 11Q25.6 13.5 25 19L22.3 35.5Q21.5 40.5 17.8 39.5" stroke-width="2.3"/><path d="M21 21H31.8" stroke-width="2"/><path d="M31.8 23.2Q35 22.3 36.6 25.5L40.5 32.8Q42 35 44.3 33.4" stroke-width="2.2"/><path d="M44.2 23.4Q42 22 39.6 25L34.6 32.3Q32.6 35 30.8 33.4" stroke-width="2"/></g><circle cx="35.3" cy="12.6" r="2.2" fill="#3e3e3e"/><circle cx="17.9" cy="38.2" r="2.2" fill="#3e3e3e"/></svg><div class="r" style="left:360px;top:256px;width:2px;height:30px;background:#dcdcdc;"></div><svg class="s" style="left:2538.0px;top:265.25px;" width="14" height="10.5" viewBox="0 0 14 10.5"><path d="M0 0H14L7.0 10.5Z" fill="#5d5d5d"/></svg><div class="r" style="left:0px;top:295.5px;width:2560px;height:2.3000000000000114px;background:#bdbdbd;"></div><div class="r" style="left:0px;top:297.8px;width:2560px;height:1.3999999999999773px;background:#fbfbfb;"></div><div class="r" style="left:0px;top:299.2px;width:2560px;height:2.8000000000000114px;background:#bababa;"></div><div class="r" style="left:0px;top:302px;width:2560px;height:42px;background:#f5f5f5;"></div><div class="r" style="left:0px;top:344px;width:2560px;height:2px;background:#c9c9c9;"></div><div class="r" style="left:1660px;top:302px;width:124px;height:40px;background:linear-gradient(#f3f3f3,#e9e9e9);"></div><div class="r" style="left:336px;top:302px;width:2px;height:42px;background:#dcdcdc;"></div><div class="r" style="left:560px;top:302px;width:2px;height:42px;background:#dcdcdc;"></div><div class="r" style="left:770px;top:302px;width:2px;height:42px;background:#dcdcdc;"></div><div class="r" style="left:980px;top:302px;width:2px;height:42px;background:#dcdcdc;"></div><div class="r" style="left:1190px;top:302px;width:2px;height:42px;background:#dcdcdc;"></div><div class="r" style="left:1322px;top:302px;width:2px;height:42px;background:#dcdcdc;"></div><div class="r" style="left:1454px;top:302px;width:2px;height:42px;background:#dcdcdc;"></div><div class="r" style="left:1660px;top:302px;width:2px;height:42px;background:#dcdcdc;"></div><div class="r" style="left:1782px;top:302px;width:2px;height:42px;background:#dcdcdc;"></div><div class="r" style="left:2000px;top:302px;width:2px;height:42px;background:#dcdcdc;"></div><div class="r" style="left:2132px;top:302px;width:2px;height:42px;background:#dcdcdc;"></div><div class="r" style="left:2264px;top:302px;width:2px;height:42px;background:#dcdcdc;"></div><div class="r" style="left:2396px;top:302px;width:2px;height:42px;background:#dcdcdc;"></div><div class="r" style="left:2528px;top:302px;width:2px;height:42px;background:#dcdcdc;"></div><div class="r" style="left:1660px;top:342px;width:124px;height:4px;background:#217346;"></div><div class="t" style="left:-1308.0px;width:3000px;text-align:center;top:313.80px;font-size:21.5px;line-height:21.5px;color:#4a4a4a;transform:scaleX(0.94);transform-origin:center center;">A</div><div class="t" style="left:-1051.0px;width:3000px;text-align:center;top:313.80px;font-size:21.5px;line-height:21.5px;color:#4a4a4a;transform:scaleX(0.94);transform-origin:center center;">B</div><div class="t" style="left:-834.0px;width:3000px;text-align:center;top:313.80px;font-size:21.5px;line-height:21.5px;color:#4a4a4a;transform:scaleX(0.94);transform-origin:center center;">C</div><div class="t" style="left:-624.0px;width:3000px;text-align:center;top:313.80px;font-size:21.5px;line-height:21.5px;color:#4a4a4a;transform:scaleX(0.94);transform-origin:center center;">D</div><div class="t" style="left:-414.0px;width:3000px;text-align:center;top:313.80px;font-size:21.5px;line-height:21.5px;color:#4a4a4a;transform:scaleX(0.94);transform-origin:center center;">E</div><div class="t" style="left:-243.0px;width:3000px;text-align:center;top:313.80px;font-size:21.5px;line-height:21.5px;color:#4a4a4a;transform:scaleX(0.94);transform-origin:center center;">F</div><div class="t" style="left:-111.0px;width:3000px;text-align:center;top:313.80px;font-size:21.5px;line-height:21.5px;color:#4a4a4a;transform:scaleX(0.94);transform-origin:center center;">G</div><div class="t" style="left:58.0px;width:3000px;text-align:center;top:313.80px;font-size:21.5px;line-height:21.5px;color:#4a4a4a;transform:scaleX(0.94);transform-origin:center center;">H</div><div class="t" style="left:222.0px;width:3000px;text-align:center;top:313.80px;font-size:21.5px;line-height:21.5px;color:#217346;font-weight:700;">I</div><div class="t" style="left:392.0px;width:3000px;text-align:center;top:313.80px;font-size:21.5px;line-height:21.5px;color:#4a4a4a;transform:scaleX(0.94);transform-origin:center center;">J</div><div class="t" style="left:567.0px;width:3000px;text-align:center;top:313.80px;font-size:21.5px;line-height:21.5px;color:#4a4a4a;transform:scaleX(0.94);transform-origin:center center;">K</div><div class="t" style="left:699.0px;width:3000px;text-align:center;top:313.80px;font-size:21.5px;line-height:21.5px;color:#4a4a4a;transform:scaleX(0.94);transform-origin:center center;">L</div><div class="t" style="left:831.0px;width:3000px;text-align:center;top:313.80px;font-size:21.5px;line-height:21.5px;color:#4a4a4a;transform:scaleX(0.94);transform-origin:center center;">M</div><div class="t" style="left:963.0px;width:3000px;text-align:center;top:313.80px;font-size:21.5px;line-height:21.5px;color:#4a4a4a;transform:scaleX(0.94);transform-origin:center center;">N</div><div class="r" style="left:0px;top:302px;width:46px;height:42px;background:#f5f5f5;"></div><svg class="s" style="left:12px;top:310px;" width="31" height="31" viewBox="0 0 31 31"><path d="M30 0V30H0Z" fill="#d9d9d9"/></svg><div class="r" style="left:46px;top:302px;width:2px;height:44px;background:#c9c9c9;"></div><div class="r" style="left:0px;top:346px;width:46px;height:1000px;background:#f5f5f5;"></div><div class="r" style="left:46px;top:346px;width:2px;height:1000px;background:#c9c9c9;"></div><div class="r" style="left:0px;top:792px;width:46px;height:38px;background:#e4e4e4;"></div><div class="r" style="left:0px;top:392px;width:46px;height:2px;background:#e2e2e2;"></div><div class="r" style="left:0px;top:410px;width:46px;height:2px;background:#e2e2e2;"></div><div class="r" style="left:0px;top:444px;width:46px;height:2px;background:#e2e2e2;"></div><div class="r" style="left:0px;top:478px;width:46px;height:2px;background:#e2e2e2;"></div><div class="r" style="left:0px;top:512px;width:46px;height:2px;background:#e2e2e2;"></div><div class="r" style="left:0px;top:546px;width:46px;height:2px;background:#e2e2e2;"></div><div class="r" style="left:0px;top:584px;width:46px;height:2px;background:#e2e2e2;"></div><div class="r" style="left:0px;top:616px;width:46px;height:2px;background:#e2e2e2;"></div><div class="r" style="left:0px;top:650px;width:46px;height:2px;background:#e2e2e2;"></div><div class="r" style="left:0px;top:686px;width:46px;height:2px;background:#e2e2e2;"></div><div class="r" style="left:0px;top:718px;width:46px;height:2px;background:#e2e2e2;"></div><div class="r" style="left:0px;top:754px;width:46px;height:2px;background:#e2e2e2;"></div><div class="r" style="left:0px;top:790px;width:46px;height:2px;background:#e2e2e2;"></div><div class="r" style="left:0px;top:830px;width:46px;height:2px;background:#e2e2e2;"></div><div class="r" style="left:0px;top:864px;width:46px;height:2px;background:#e2e2e2;"></div><div class="r" style="left:0px;top:896px;width:46px;height:2px;background:#e2e2e2;"></div><div class="r" style="left:0px;top:928px;width:46px;height:2px;background:#e2e2e2;"></div><div class="r" style="left:0px;top:960px;width:46px;height:2px;background:#e2e2e2;"></div><div class="r" style="left:0px;top:992px;width:46px;height:2px;background:#e2e2e2;"></div><div class="r" style="left:0px;top:1024px;width:46px;height:2px;background:#e2e2e2;"></div><div class="r" style="left:0px;top:1056px;width:46px;height:2px;background:#e2e2e2;"></div><div class="r" style="left:0px;top:1090px;width:46px;height:2px;background:#e2e2e2;"></div><div class="r" style="left:0px;top:1122px;width:46px;height:2px;background:#e2e2e2;"></div><div class="r" style="left:0px;top:1154px;width:46px;height:2px;background:#e2e2e2;"></div><div class="r" style="left:0px;top:1188px;width:46px;height:2px;background:#e2e2e2;"></div><div class="r" style="left:0px;top:1220px;width:46px;height:2px;background:#e2e2e2;"></div><div class="r" style="left:0px;top:1252px;width:46px;height:2px;background:#e2e2e2;"></div><div class="r" style="left:0px;top:1286px;width:46px;height:2px;background:#e2e2e2;"></div><div class="r" style="left:0px;top:1326px;width:46px;height:2px;background:#e2e2e2;"></div><div class="t" style="left:-1475px;width:3000px;text-align:center;top:366.05px;font-size:21.2px;line-height:21.2px;color:#555;">1</div><div class="r" style="left:0;top:393px;width:46px;height:17px;overflow:hidden"><div class="t" style="left:-1475px;width:3000px;text-align:center;top:-6.45px;font-size:21.2px;line-height:21.2px;color:#555;">2</div></div><div class="t" style="left:-1475px;width:3000px;text-align:center;top:417.55px;font-size:21.2px;line-height:21.2px;color:#555;">3</div><div class="t" style="left:-1475px;width:3000px;text-align:center;top:453.05px;font-size:21.2px;line-height:21.2px;color:#555;">4</div><div class="t" style="left:-1475px;width:3000px;text-align:center;top:488.05px;font-size:21.2px;line-height:21.2px;color:#555;">5</div><div class="t" style="left:-1475px;width:3000px;text-align:center;top:522.05px;font-size:21.2px;line-height:21.2px;color:#555;">6</div><div class="t" style="left:-1475px;width:3000px;text-align:center;top:560.05px;font-size:21.2px;line-height:21.2px;color:#555;">7</div><div class="t" style="left:-1475px;width:3000px;text-align:center;top:592.05px;font-size:21.2px;line-height:21.2px;color:#555;">8</div><div class="t" style="left:-1475px;width:3000px;text-align:center;top:626.05px;font-size:21.2px;line-height:21.2px;color:#555;">9</div><div class="t" style="left:-1475px;width:3000px;text-align:center;top:662.05px;font-size:21.2px;line-height:21.2px;color:#555;">10</div><div class="t" style="left:-1475px;width:3000px;text-align:center;top:694.05px;font-size:21.2px;line-height:21.2px;color:#555;">11</div><div class="t" style="left:-1475px;width:3000px;text-align:center;top:730.05px;font-size:21.2px;line-height:21.2px;color:#555;">12</div><div class="t" style="left:-1475px;width:3000px;text-align:center;top:766.05px;font-size:21.2px;line-height:21.2px;color:#555;">13</div><div class="t" style="left:-1475px;width:3000px;text-align:center;top:806.05px;font-size:21.2px;line-height:21.2px;color:#217346;font-weight:700;">14</div><div class="t" style="left:-1475px;width:3000px;text-align:center;top:840.05px;font-size:21.2px;line-height:21.2px;color:#555;">15</div><div class="t" style="left:-1475px;width:3000px;text-align:center;top:872.05px;font-size:21.2px;line-height:21.2px;color:#555;">16</div><div class="t" style="left:-1475px;width:3000px;text-align:center;top:904.05px;font-size:21.2px;line-height:21.2px;color:#555;">17</div><div class="t" style="left:-1475px;width:3000px;text-align:center;top:936.05px;font-size:21.2px;line-height:21.2px;color:#555;">18</div><div class="t" style="left:-1475px;width:3000px;text-align:center;top:968.05px;font-size:21.2px;line-height:21.2px;color:#555;">19</div><div class="t" style="left:-1475px;width:3000px;text-align:center;top:1000.05px;font-size:21.2px;line-height:21.2px;color:#555;">20</div><div class="t" style="left:-1475px;width:3000px;text-align:center;top:1032.05px;font-size:21.2px;line-height:21.2px;color:#555;">21</div><div class="t" style="left:-1475px;width:3000px;text-align:center;top:1066.05px;font-size:21.2px;line-height:21.2px;color:#555;">22</div><div class="t" style="left:-1475px;width:3000px;text-align:center;top:1098.05px;font-size:21.2px;line-height:21.2px;color:#555;">23</div><div class="t" style="left:-1475px;width:3000px;text-align:center;top:1130.05px;font-size:21.2px;line-height:21.2px;color:#555;">24</div><div class="t" style="left:-1475px;width:3000px;text-align:center;top:1164.05px;font-size:21.2px;line-height:21.2px;color:#555;">25</div><div class="t" style="left:-1475px;width:3000px;text-align:center;top:1196.05px;font-size:21.2px;line-height:21.2px;color:#555;">26</div><div class="t" style="left:-1475px;width:3000px;text-align:center;top:1228.05px;font-size:21.2px;line-height:21.2px;color:#555;">27</div><div class="t" style="left:-1475px;width:3000px;text-align:center;top:1262.05px;font-size:21.2px;line-height:21.2px;color:#555;">28</div><div class="t" style="left:-1475px;width:3000px;text-align:center;top:1302.05px;font-size:21.2px;line-height:21.2px;color:#555;">29</div><div class="t" style="left:-1475px;width:3000px;text-align:center;top:1333.05px;font-size:21.2px;line-height:21.2px;color:#555;">30</div><div class="r" style="left:44px;top:790px;width:3.5px;height:42px;background:#217346;"></div><div class="r" style="left:48px;top:346px;width:2512px;height:1000px;overflow:hidden;background:#fff"><div class="r" style="left:288px;top:0px;width:2px;height:1000px;background:#c7c7c7;"></div><div class="r" style="left:512px;top:0px;width:2px;height:1000px;background:#c7c7c7;"></div><div class="r" style="left:722px;top:0px;width:2px;height:1000px;background:#c7c7c7;"></div><div class="r" style="left:932px;top:0px;width:2px;height:1000px;background:#c7c7c7;"></div><div class="r" style="left:1142px;top:0px;width:2px;height:1000px;background:#c7c7c7;"></div><div class="r" style="left:1274px;top:0px;width:2px;height:1000px;background:#c7c7c7;"></div><div class="r" style="left:1406px;top:0px;width:2px;height:1000px;background:#c7c7c7;"></div><div class="r" style="left:1612px;top:0px;width:2px;height:1000px;background:#c7c7c7;"></div><div class="r" style="left:1734px;top:0px;width:2px;height:1000px;background:#c7c7c7;"></div><div class="r" style="left:1952px;top:0px;width:2px;height:1000px;background:#c7c7c7;"></div><div class="r" style="left:2084px;top:0px;width:2px;height:1000px;background:#c7c7c7;"></div><div class="r" style="left:2216px;top:0px;width:2px;height:1000px;background:#c7c7c7;"></div><div class="r" style="left:2348px;top:0px;width:2px;height:1000px;background:#c7c7c7;"></div><div class="r" style="left:2480px;top:0px;width:2px;height:1000px;background:#c7c7c7;"></div><div class="r" style="left:0px;top:46px;width:2512px;height:2px;background:#c7c7c7;"></div><div class="r" style="left:0px;top:64px;width:2512px;height:2px;background:#c7c7c7;"></div><div class="r" style="left:0px;top:98px;width:2512px;height:2px;background:#c7c7c7;"></div><div class="r" style="left:0px;top:132px;width:2512px;height:2px;background:#c7c7c7;"></div><div class="r" style="left:0px;top:166px;width:2512px;height:2px;background:#c7c7c7;"></div><div class="r" style="left:0px;top:200px;width:2512px;height:2px;background:#c7c7c7;"></div><div class="r" style="left:0px;top:238px;width:2512px;height:2px;background:#c7c7c7;"></div><div class="r" style="left:0px;top:270px;width:2512px;height:2px;background:#c7c7c7;"></div><div class="r" style="left:0px;top:304px;width:2512px;height:2px;background:#c7c7c7;"></div><div class="r" style="left:0px;top:340px;width:2512px;height:2px;background:#c7c7c7;"></div><div class="r" style="left:0px;top:372px;width:2512px;height:2px;background:#c7c7c7;"></div><div class="r" style="left:0px;top:408px;width:2512px;height:2px;background:#c7c7c7;"></div><div class="r" style="left:0px;top:444px;width:2512px;height:2px;background:#c7c7c7;"></div><div class="r" style="left:0px;top:484px;width:2512px;height:2px;background:#c7c7c7;"></div><div class="r" style="left:0px;top:518px;width:2512px;height:2px;background:#c7c7c7;"></div><div class="r" style="left:0px;top:550px;width:2512px;height:2px;background:#c7c7c7;"></div><div class="r" style="left:0px;top:582px;width:2512px;height:2px;background:#c7c7c7;"></div><div class="r" style="left:0px;top:614px;width:2512px;height:2px;background:#c7c7c7;"></div><div class="r" style="left:0px;top:646px;width:2512px;height:2px;background:#c7c7c7;"></div><div class="r" style="left:0px;top:678px;width:2512px;height:2px;background:#c7c7c7;"></div><div class="r" style="left:0px;top:710px;width:2512px;height:2px;background:#c7c7c7;"></div><div class="r" style="left:0px;top:744px;width:2512px;height:2px;background:#c7c7c7;"></div><div class="r" style="left:0px;top:776px;width:2512px;height:2px;background:#c7c7c7;"></div><div class="r" style="left:0px;top:808px;width:2512px;height:2px;background:#c7c7c7;"></div><div class="r" style="left:0px;top:842px;width:2512px;height:2px;background:#c7c7c7;"></div><div class="r" style="left:0px;top:874px;width:2512px;height:2px;background:#c7c7c7;"></div><div class="r" style="left:0px;top:906px;width:2512px;height:2px;background:#c7c7c7;"></div><div class="r" style="left:0px;top:940px;width:2512px;height:2px;background:#c7c7c7;"></div><div class="r" style="left:0px;top:980px;width:2512px;height:2px;background:#c7c7c7;"></div><div class="r" style="left:0px;top:1011px;width:2512px;height:2px;background:#c7c7c7;"></div><div class="r" style="left:0px;top:-1px;width:1144px;height:48.5px;background:#000;"></div><div class="t" style="left:-929px;width:3000px;text-align:center;top:14.47px;font-size:27.8px;line-height:27.8px;color:#fff;font-weight:700;font-style:italic;">First Apartment Budget Spreadsheet</div><div class="r" style="left:0px;top:64px;width:1144px;height:2px;background:#000;"></div><div class="r" style="left:0px;top:66px;width:1142px;height:30px;background:#bfbfbf;"></div><div class="r" style="left:0px;top:96px;width:1144px;height:4px;background:#000;"></div><div class="t" style="left:-930px;width:3000px;text-align:center;top:72.38px;font-size:22px;line-height:22px;color:#fff;font-weight:700;font-style:italic;transform:scaleX(0.8796);transform-origin:center center;">KITCHEN</div><div class="r" style="left:0px;top:100px;width:1142px;height:32px;background:#d8d8d8;"></div><div class="r" style="left:0px;top:132px;width:1144px;height:2px;background:#000;"></div><div class="t" style="left:-1355.5px;width:3000px;text-align:center;top:107.18px;font-size:21.64px;line-height:21.64px;color:#fff;font-weight:700;">Item</div><div class="r" style="left:254.5px;top:100px;width:33.5px;height:31.5px;background:linear-gradient(#fdfdfd,#f1f1f1);border:1.5px solid #7f7f7f;box-sizing:border-box;border-radius:0 0 3px 3px;"></div><div class="r" style="left:262.5px;top:111px;width:17.0px;height:10.5px;background:#7b7b7b;clip-path:polygon(0 0,100% 0,50% 100%);"></div><div class="t" style="left:-1098.5px;width:3000px;text-align:center;top:108.42px;font-size:20.18px;line-height:20.18px;color:#fff;font-weight:700;">Budgeted Cost</div><div class="r" style="left:478px;top:100px;width:33.5px;height:31.5px;background:linear-gradient(#fdfdfd,#f1f1f1);border:1.5px solid #7f7f7f;box-sizing:border-box;border-radius:0 0 3px 3px;"></div><div class="r" style="left:486px;top:111px;width:17px;height:10.5px;background:#7b7b7b;clip-path:polygon(0 0,100% 0,50% 100%);"></div><div class="t" style="left:-881.5px;width:3000px;text-align:center;top:108.51px;font-size:20.07px;line-height:20.07px;color:#fff;font-weight:700;">Actual Cost</div><div class="r" style="left:688.5px;top:100px;width:33.5px;height:31.5px;background:linear-gradient(#fdfdfd,#f1f1f1);border:1.5px solid #7f7f7f;box-sizing:border-box;border-radius:0 0 3px 3px;"></div><div class="r" style="left:696.5px;top:111px;width:17.0px;height:10.5px;background:#7b7b7b;clip-path:polygon(0 0,100% 0,50% 100%);"></div><div class="t" style="left:-671.5px;width:3000px;text-align:center;top:107.84px;font-size:20.86px;line-height:20.86px;color:#fff;font-weight:700;">Difference</div><div class="r" style="left:898.5px;top:100px;width:33.5px;height:31.5px;background:linear-gradient(#fdfdfd,#f1f1f1);border:1.5px solid #7f7f7f;box-sizing:border-box;border-radius:0 0 3px 3px;"></div><div class="r" style="left:906.5px;top:111px;width:17.0px;height:10.5px;background:#7b7b7b;clip-path:polygon(0 0,100% 0,50% 100%);"></div><div class="t" style="left:-461.5px;width:3000px;text-align:center;top:109.44px;font-size:18.97px;line-height:18.97px;color:#fff;font-weight:700;">Link</div><div class="r" style="left:1108.5px;top:100px;width:33.5px;height:31.5px;background:linear-gradient(#fdfdfd,#f1f1f1);border:1.5px solid #7f7f7f;box-sizing:border-box;border-radius:0 0 3px 3px;"></div><div class="r" style="left:1116.5px;top:111px;width:17.0px;height:10.5px;background:#7b7b7b;clip-path:polygon(0 0,100% 0,50% 100%);"></div><div class="r" style="left:0px;top:134px;width:1142px;height:32px;background:#ededed;"></div><div class="r" style="left:722px;top:134px;width:212px;height:32px;background:#c6efce;"></div><div class="t" style="left:4px;top:142.38px;font-size:22px;line-height:22px;color:#000;-webkit-text-stroke:0.3px currentColor;transform:scaleX(0.962);transform-origin:left center;">Table + Chairs/Bar Stools</div><div class="t" style="left:-2493.8px;width:3000px;text-align:right;top:142.59px;font-size:21.75px;line-height:21.75px;color:#000;-webkit-text-stroke:0.3px currentColor;">$300.00</div><div class="t" style="left:-2284px;width:3000px;text-align:right;top:142.59px;font-size:21.75px;line-height:21.75px;color:#000;-webkit-text-stroke:0.3px currentColor;">$260.00</div><div class="t" style="left:-2072px;width:3000px;text-align:right;top:142.59px;font-size:21.75px;line-height:21.75px;color:#006100;-webkit-text-stroke:0.3px currentColor;">$40.00</div><div class="r" style="left:934px;top:134px;width:208px;height:32px;overflow:hidden"><div class="t" style="left:2px;top:-5.55px;font-size:12px;line-height:12px;color:#0563c1;font-family:'Liberation Serif', serif;text-decoration:underline;-webkit-text-stroke:0.15px currentColor;">https://www.target.com/p/set-of-2-becket-</div><div class="t" style="left:2px;top:13.95px;font-size:12px;line-height:12px;color:#0563c1;font-family:'Liberation Serif', serif;text-decoration:underline;-webkit-text-stroke:0.15px currentColor;">metal-x-back-barstool-black-project-62-</div></div><div class="r" style="left:0px;top:166px;width:1142px;height:2px;background:#c7c7c7;"></div><div class="r" style="left:722px;top:168px;width:212px;height:32px;background:#ffc7ce;"></div><div class="t" style="left:4px;top:176.38px;font-size:22px;line-height:22px;color:#000;-webkit-text-stroke:0.3px currentColor;transform:scaleX(0.962);transform-origin:left center;">Pots + Pans</div><div class="t" style="left:-2493.8px;width:3000px;text-align:right;top:176.59px;font-size:21.75px;line-height:21.75px;color:#000;-webkit-text-stroke:0.3px currentColor;">$150.00</div><div class="t" style="left:-2284px;width:3000px;text-align:right;top:176.59px;font-size:21.75px;line-height:21.75px;color:#000;-webkit-text-stroke:0.3px currentColor;">$249.00</div><div class="t" style="left:-2072px;width:3000px;text-align:right;top:176.59px;font-size:21.75px;line-height:21.75px;color:#9c0006;-webkit-text-stroke:0.3px currentColor;">-$99.00</div><div class="r" style="left:934px;top:168px;width:208px;height:32px;overflow:hidden"><div class="t" style="left:2px;top:-5.55px;font-size:12px;line-height:12px;color:#000;font-family:'Liberation Serif', serif;-webkit-text-stroke:0.15px currentColor;">https://www.amazon.com/Cuisinart-66-</div><div class="t" style="left:2px;top:13.95px;font-size:12px;line-height:12px;color:#000;font-family:'Liberation Serif', serif;-webkit-text-stroke:0.15px currentColor;">17N-Classic-Non-Stick-</div></div><div class="r" style="left:0px;top:200px;width:1142px;height:2px;background:#c7c7c7;"></div><div class="r" style="left:0px;top:202px;width:1142px;height:36px;background:#ededed;"></div><div class="r" style="left:722px;top:202px;width:212px;height:36px;background:#c6efce;"></div><div class="t" style="left:4px;top:214.38px;font-size:22px;line-height:22px;color:#000;-webkit-text-stroke:0.3px currentColor;transform:scaleX(0.962);transform-origin:left center;">Dishes + Bowls</div><div class="t" style="left:-2493.8px;width:3000px;text-align:right;top:214.59px;font-size:21.75px;line-height:21.75px;color:#000;-webkit-text-stroke:0.3px currentColor;">$100.00</div><div class="t" style="left:-2284px;width:3000px;text-align:right;top:214.59px;font-size:21.75px;line-height:21.75px;color:#000;-webkit-text-stroke:0.3px currentColor;">$75.00</div><div class="t" style="left:-2072px;width:3000px;text-align:right;top:214.59px;font-size:21.75px;line-height:21.75px;color:#006100;-webkit-text-stroke:0.3px currentColor;">$25.00</div><div class="r" style="left:934px;top:202px;width:208px;height:36px;overflow:hidden"><div class="t" style="left:2px;top:-1.55px;font-size:12px;line-height:12px;color:#000;font-family:'Liberation Serif', serif;-webkit-text-stroke:0.15px currentColor;">https://www.target.com/p/16pc-porcelain-</div><div class="t" style="left:2px;top:17.95px;font-size:12px;line-height:12px;color:#000;font-family:'Liberation Serif', serif;-webkit-text-stroke:0.15px currentColor;">beaded-rim-dinnerware-set-white-</div></div><div class="r" style="left:0px;top:238px;width:1142px;height:2px;background:#c7c7c7;"></div><div class="r" style="left:722px;top:240px;width:212px;height:30px;background:#c6efce;"></div><div class="t" style="left:4px;top:246.38px;font-size:22px;line-height:22px;color:#000;-webkit-text-stroke:0.3px currentColor;transform:scaleX(0.962);transform-origin:left center;">Mixing Bowls</div><div class="t" style="left:-2493.8px;width:3000px;text-align:right;top:246.59px;font-size:21.75px;line-height:21.75px;color:#000;-webkit-text-stroke:0.3px currentColor;">$30.00</div><div class="t" style="left:-2284px;width:3000px;text-align:right;top:246.59px;font-size:21.75px;line-height:21.75px;color:#000;-webkit-text-stroke:0.3px currentColor;">$0.00</div><div class="t" style="left:-2072px;width:3000px;text-align:right;top:246.59px;font-size:21.75px;line-height:21.75px;color:#006100;-webkit-text-stroke:0.3px currentColor;">$30.00</div><div class="t" style="left:936px;top:254.45px;font-size:12px;line-height:12px;color:#000;font-family:'Liberation Serif', serif;-webkit-text-stroke:0.15px currentColor;">GIFT</div><div class="r" style="left:0px;top:270px;width:1142px;height:2px;background:#c7c7c7;"></div><div class="r" style="left:0px;top:272px;width:1142px;height:32px;background:#ededed;"></div><div class="r" style="left:722px;top:272px;width:212px;height:32px;background:#ffc7ce;"></div><div class="t" style="left:4px;top:280.38px;font-size:22px;line-height:22px;color:#000;-webkit-text-stroke:0.3px currentColor;transform:scaleX(0.962);transform-origin:left center;">Cups + Mugs + Wine Glasses</div><div class="t" style="left:-2493.8px;width:3000px;text-align:right;top:280.59px;font-size:21.75px;line-height:21.75px;color:#000;-webkit-text-stroke:0.3px currentColor;">$100.00</div><div class="t" style="left:-2284px;width:3000px;text-align:right;top:280.59px;font-size:21.75px;line-height:21.75px;color:#000;-webkit-text-stroke:0.3px currentColor;">$120.00</div><div class="t" style="left:-2072px;width:3000px;text-align:right;top:280.59px;font-size:21.75px;line-height:21.75px;color:#9c0006;-webkit-text-stroke:0.3px currentColor;">-$20.00</div><div class="r" style="left:934px;top:272px;width:208px;height:32px;overflow:hidden"><div class="t" style="left:2px;top:-5.55px;font-size:12px;line-height:12px;color:#000;font-family:'Liberation Serif', serif;-webkit-text-stroke:0.15px currentColor;">https://www.williams-</div><div class="t" style="left:2px;top:13.95px;font-size:12px;line-height:12px;color:#000;font-family:'Liberation Serif', serif;-webkit-text-stroke:0.15px currentColor;">sonoma.com/products/williams-sonoma-</div></div><div class="r" style="left:0px;top:304px;width:1142px;height:2px;background:#c7c7c7;"></div><div class="r" style="left:722px;top:306px;width:212px;height:34px;background:#c6efce;"></div><div class="t" style="left:4px;top:316.38px;font-size:22px;line-height:22px;color:#000;-webkit-text-stroke:0.3px currentColor;transform:scaleX(0.962);transform-origin:left center;">Cookie Sheet Set</div><div class="t" style="left:-2493.8px;width:3000px;text-align:right;top:316.59px;font-size:21.75px;line-height:21.75px;color:#000;-webkit-text-stroke:0.3px currentColor;">$100.00</div><div class="t" style="left:-2284px;width:3000px;text-align:right;top:316.59px;font-size:21.75px;line-height:21.75px;color:#000;-webkit-text-stroke:0.3px currentColor;">$40.00</div><div class="t" style="left:-2072px;width:3000px;text-align:right;top:316.59px;font-size:21.75px;line-height:21.75px;color:#006100;-webkit-text-stroke:0.3px currentColor;">$60.00</div><div class="r" style="left:934px;top:306px;width:208px;height:34px;overflow:hidden"><div class="t" style="left:2px;top:-3.55px;font-size:12px;line-height:12px;color:#000;font-family:'Liberation Serif', serif;-webkit-text-stroke:0.15px currentColor;">https://www.target.com/p/6pc-aluminized-</div><div class="t" style="left:2px;top:15.95px;font-size:12px;line-height:12px;color:#000;font-family:'Liberation Serif', serif;-webkit-text-stroke:0.15px currentColor;">steel-bakeware-set-gold-made-by-design-</div></div><div class="r" style="left:0px;top:340px;width:1142px;height:2px;background:#c7c7c7;"></div><div class="r" style="left:0px;top:342px;width:1144px;height:30px;background:#ededed;"></div><div class="r" style="left:722px;top:342px;width:212px;height:30px;background:#ffc7ce;"></div><div class="t" style="left:4px;top:348.38px;font-size:22px;line-height:22px;color:#000;-webkit-text-stroke:0.3px currentColor;transform:scaleX(0.962);transform-origin:left center;">Utensils</div><div class="t" style="left:-2493.8px;width:3000px;text-align:right;top:348.59px;font-size:21.75px;line-height:21.75px;color:#000;-webkit-text-stroke:0.3px currentColor;">$100.00</div><div class="t" style="left:-2284px;width:3000px;text-align:right;top:348.59px;font-size:21.75px;line-height:21.75px;color:#000;-webkit-text-stroke:0.3px currentColor;">$120.00</div><div class="t" style="left:-2072px;width:3000px;text-align:right;top:348.59px;font-size:21.75px;line-height:21.75px;color:#9c0006;-webkit-text-stroke:0.3px currentColor;">-$20.00</div><div class="t" style="left:936px;top:356.45px;font-size:12px;line-height:12px;color:#000;font-family:'Liberation Serif', serif;-webkit-text-stroke:0.15px currentColor;">https://rstyle.me/+d3LREVABOHu1Uu4A7CsL7w</div><div class="r" style="left:0px;top:372px;width:1142px;height:2px;background:#c7c7c7;"></div><div class="t" style="left:4px;top:384.38px;font-size:22px;line-height:22px;color:#000;-webkit-text-stroke:0.3px currentColor;transform:scaleX(0.962);transform-origin:left center;">Utsensil Set</div><div class="t" style="left:-2493.8px;width:3000px;text-align:right;top:384.59px;font-size:21.75px;line-height:21.75px;color:#000;-webkit-text-stroke:0.3px currentColor;">$100.00</div><div class="t" style="left:-2284px;width:3000px;text-align:right;top:384.59px;font-size:21.75px;line-height:21.75px;color:#000;-webkit-text-stroke:0.3px currentColor;">$100.00</div><div class="t" style="left:-2072px;width:3000px;text-align:right;top:384.59px;font-size:21.75px;line-height:21.75px;color:#000;-webkit-text-stroke:0.3px currentColor;">$0.00</div><div class="r" style="left:934px;top:374px;width:208px;height:34px;overflow:hidden"><div class="t" style="left:2px;top:-3.55px;font-size:12px;line-height:12px;color:#000;font-family:'Liberation Serif', serif;-webkit-text-stroke:0.15px currentColor;">https://www.amazon.com/OXO-1069228-</div><div class="t" style="left:2px;top:15.95px;font-size:12px;line-height:12px;color:#000;font-family:'Liberation Serif', serif;-webkit-text-stroke:0.15px currentColor;">15-Piece-Everyday-</div></div><div class="r" style="left:0px;top:408px;width:1142px;height:2px;background:#c7c7c7;"></div><div class="r" style="left:0px;top:410px;width:1142px;height:34px;background:#ededed;"></div><div class="r" style="left:722px;top:410px;width:212px;height:34px;background:#c6efce;"></div><div class="t" style="left:4px;top:420.38px;font-size:22px;line-height:22px;color:#000;-webkit-text-stroke:0.3px currentColor;transform:scaleX(0.962);transform-origin:left center;">Tupperware</div><div class="t" style="left:-2493.8px;width:3000px;text-align:right;top:420.59px;font-size:21.75px;line-height:21.75px;color:#000;-webkit-text-stroke:0.3px currentColor;">$20.00</div><div class="t" style="left:-2284px;width:3000px;text-align:right;top:420.59px;font-size:21.75px;line-height:21.75px;color:#000;-webkit-text-stroke:0.3px currentColor;">$17.99</div><div class="t" style="left:-2072px;width:3000px;text-align:right;top:420.59px;font-size:21.75px;line-height:21.75px;color:#006100;-webkit-text-stroke:0.3px currentColor;">$2.01</div><div class="r" style="left:934px;top:410px;width:208px;height:34px;overflow:hidden"><div class="t" style="left:2px;top:-3.55px;font-size:12px;line-height:12px;color:#000;font-family:'Liberation Serif', serif;-webkit-text-stroke:0.15px currentColor;">https://www.amazon.com/Rubbermaid-</div><div class="t" style="left:2px;top:15.95px;font-size:12px;line-height:12px;color:#000;font-family:'Liberation Serif', serif;-webkit-text-stroke:0.15px currentColor;">Brilliance-Container-10-Piece-</div></div><div class="r" style="left:0px;top:444px;width:1142px;height:2px;background:#c7c7c7;"></div><div class="r" style="left:722px;top:446px;width:212px;height:38px;background:#ffc7ce;"></div><div class="t" style="left:4px;top:460.38px;font-size:22px;line-height:22px;color:#000;-webkit-text-stroke:0.3px currentColor;transform:scaleX(0.962);transform-origin:left center;">Measuring Cup</div><div class="t" style="left:-2493.8px;width:3000px;text-align:right;top:460.59px;font-size:21.75px;line-height:21.75px;color:#000;-webkit-text-stroke:0.3px currentColor;">$5.00</div><div class="t" style="left:-2284px;width:3000px;text-align:right;top:460.59px;font-size:21.75px;line-height:21.75px;color:#000;-webkit-text-stroke:0.3px currentColor;">$19.79</div><div class="t" style="left:-2072px;width:3000px;text-align:right;top:460.59px;font-size:21.75px;line-height:21.75px;color:#9c0006;-webkit-text-stroke:0.3px currentColor;">-$14.79</div><div class="r" style="left:934px;top:446px;width:208px;height:38px;overflow:hidden"><div class="t" style="left:2px;top:0.45px;font-size:12px;line-height:12px;color:#000;font-family:'Liberation Serif', serif;-webkit-text-stroke:0.15px currentColor;">https://www.amazon.com/Global-store-</div><div class="t" style="left:2px;top:19.95px;font-size:12px;line-height:12px;color:#000;font-family:'Liberation Serif', serif;-webkit-text-stroke:0.15px currentColor;">Measuring-Stainless-Ingredients-</div></div><div class="r" style="left:0px;top:484px;width:1142px;height:2px;background:#c7c7c7;"></div><div class="r" style="left:0px;top:486px;width:1142px;height:32px;background:#ededed;"></div><div class="r" style="left:722px;top:486px;width:212px;height:32px;background:#c6efce;"></div><div class="t" style="left:4px;top:494.38px;font-size:22px;line-height:22px;color:#000;-webkit-text-stroke:0.3px currentColor;transform:scaleX(0.962);transform-origin:left center;">Blender</div><div class="t" style="left:-2493.8px;width:3000px;text-align:right;top:494.59px;font-size:21.75px;line-height:21.75px;color:#000;-webkit-text-stroke:0.3px currentColor;">$179.00</div><div class="t" style="left:-2284px;width:3000px;text-align:right;top:494.59px;font-size:21.75px;line-height:21.75px;color:#000;-webkit-text-stroke:0.3px currentColor;">$129.00</div><div class="t" style="left:-2072px;width:3000px;text-align:right;top:494.59px;font-size:21.75px;line-height:21.75px;color:#006100;-webkit-text-stroke:0.3px currentColor;">$50.00</div><div class="r" style="left:934px;top:486px;width:208px;height:32px;overflow:hidden"><div class="t" style="left:2px;top:-5.55px;font-size:12px;line-height:12px;color:#000;font-family:'Liberation Serif', serif;-webkit-text-stroke:0.15px currentColor;">https://www.amazon.com/gp/product/B07</div><div class="t" style="left:2px;top:13.95px;font-size:12px;line-height:12px;color:#000;font-family:'Liberation Serif', serif;-webkit-text-stroke:0.15px currentColor;">S65293D/ref=as_li_ss_tl?ie=UTF8&amp;psc=</div></div><div class="r" style="left:0px;top:518px;width:1142px;height:2px;background:#c7c7c7;"></div><div class="r" style="left:722px;top:520px;width:212px;height:30px;background:#c6efce;"></div><div class="t" style="left:4px;top:526.38px;font-size:22px;line-height:22px;color:#000;-webkit-text-stroke:0.3px currentColor;transform:scaleX(0.962);transform-origin:left center;">Mixer</div><div class="t" style="left:-2493.8px;width:3000px;text-align:right;top:526.59px;font-size:21.75px;line-height:21.75px;color:#000;-webkit-text-stroke:0.3px currentColor;">$350.00</div><div class="t" style="left:-2284px;width:3000px;text-align:right;top:526.59px;font-size:21.75px;line-height:21.75px;color:#000;-webkit-text-stroke:0.3px currentColor;">$0.00</div><div class="t" style="left:-2072px;width:3000px;text-align:right;top:526.59px;font-size:21.75px;line-height:21.75px;color:#006100;-webkit-text-stroke:0.3px currentColor;">$350.00</div><div class="t" style="left:936px;top:534.45px;font-size:12px;line-height:12px;color:#000;font-family:'Liberation Serif', serif;-webkit-text-stroke:0.15px currentColor;">GIFT</div><div class="r" style="left:0px;top:550px;width:1142px;height:2px;background:#c7c7c7;"></div><div class="r" style="left:0px;top:552px;width:1142px;height:30px;background:#ededed;"></div><div class="r" style="left:722px;top:552px;width:212px;height:30px;background:#c6efce;"></div><div class="t" style="left:4px;top:558.38px;font-size:22px;line-height:22px;color:#000;-webkit-text-stroke:0.3px currentColor;transform:scaleX(0.962);transform-origin:left center;">Keurig / Teapot</div><div class="t" style="left:-2493.8px;width:3000px;text-align:right;top:558.59px;font-size:21.75px;line-height:21.75px;color:#000;-webkit-text-stroke:0.3px currentColor;">$30.00</div><div class="t" style="left:-2284px;width:3000px;text-align:right;top:558.59px;font-size:21.75px;line-height:21.75px;color:#000;-webkit-text-stroke:0.3px currentColor;">$0.00</div><div class="t" style="left:-2072px;width:3000px;text-align:right;top:558.59px;font-size:21.75px;line-height:21.75px;color:#006100;-webkit-text-stroke:0.3px currentColor;">$30.00</div><div class="t" style="left:936px;top:566.45px;font-size:12px;line-height:12px;color:#000;font-family:'Liberation Serif', serif;-webkit-text-stroke:0.15px currentColor;">GIFT</div><div class="r" style="left:0px;top:582px;width:1142px;height:2px;background:#c7c7c7;"></div><div class="r" style="left:722px;top:584px;width:212px;height:30px;background:#c6efce;"></div><div class="t" style="left:4px;top:590.38px;font-size:22px;line-height:22px;color:#000;-webkit-text-stroke:0.3px currentColor;transform:scaleX(0.962);transform-origin:left center;">Toaster</div><div class="t" style="left:-2493.8px;width:3000px;text-align:right;top:590.59px;font-size:21.75px;line-height:21.75px;color:#000;-webkit-text-stroke:0.3px currentColor;">$20.00</div><div class="t" style="left:-2284px;width:3000px;text-align:right;top:590.59px;font-size:21.75px;line-height:21.75px;color:#000;-webkit-text-stroke:0.3px currentColor;">$0.00</div><div class="t" style="left:-2072px;width:3000px;text-align:right;top:590.59px;font-size:21.75px;line-height:21.75px;color:#006100;-webkit-text-stroke:0.3px currentColor;">$20.00</div><div class="t" style="left:936px;top:598.45px;font-size:12px;line-height:12px;color:#000;font-family:'Liberation Serif', serif;-webkit-text-stroke:0.15px currentColor;">GIFT</div><div class="r" style="left:0px;top:614px;width:1142px;height:2px;background:#c7c7c7;"></div><div class="r" style="left:0px;top:616px;width:1142px;height:30px;background:#ededed;"></div><div class="r" style="left:722px;top:616px;width:212px;height:30px;background:#ffc7ce;"></div><div class="t" style="left:4px;top:622.38px;font-size:22px;line-height:22px;color:#000;-webkit-text-stroke:0.3px currentColor;transform:scaleX(0.962);transform-origin:left center;">Oven Mitts</div><div class="t" style="left:-2493.8px;width:3000px;text-align:right;top:622.59px;font-size:21.75px;line-height:21.75px;color:#000;-webkit-text-stroke:0.3px currentColor;">$5.00</div><div class="t" style="left:-2284px;width:3000px;text-align:right;top:622.59px;font-size:21.75px;line-height:21.75px;color:#000;-webkit-text-stroke:0.3px currentColor;">$7.00</div><div class="t" style="left:-2072px;width:3000px;text-align:right;top:622.59px;font-size:21.75px;line-height:21.75px;color:#9c0006;-webkit-text-stroke:0.3px currentColor;">-$2.00</div><div class="r" style="left:934px;top:616px;width:208px;height:30px;overflow:hidden"><div class="t" style="left:2px;top:-7.55px;font-size:12px;line-height:12px;color:#000;font-family:'Liberation Serif', serif;-webkit-text-stroke:0.15px currentColor;">https://www.target.com/p/yarn-dyed-</div><div class="t" style="left:2px;top:11.95px;font-size:12px;line-height:12px;color:#000;font-family:'Liberation Serif', serif;-webkit-text-stroke:0.15px currentColor;">woven-oven-mitt-yellow-room-essentials-</div></div><div class="r" style="left:0px;top:646px;width:1142px;height:2px;background:#c7c7c7;"></div><div class="r" style="left:722px;top:648px;width:212px;height:30px;background:#c6efce;"></div><div class="t" style="left:4px;top:654.38px;font-size:22px;line-height:22px;color:#000;-webkit-text-stroke:0.3px currentColor;transform:scaleX(0.962);transform-origin:left center;">Dish Towels</div><div class="t" style="left:-2493.8px;width:3000px;text-align:right;top:654.59px;font-size:21.75px;line-height:21.75px;color:#000;-webkit-text-stroke:0.3px currentColor;">$9.99</div><div class="t" style="left:-2284px;width:3000px;text-align:right;top:654.59px;font-size:21.75px;line-height:21.75px;color:#000;-webkit-text-stroke:0.3px currentColor;">$7.99</div><div class="t" style="left:-2072px;width:3000px;text-align:right;top:654.59px;font-size:21.75px;line-height:21.75px;color:#006100;-webkit-text-stroke:0.3px currentColor;">$2.00</div><div class="t" style="left:936px;top:662.45px;font-size:12px;line-height:12px;color:#000;font-family:'Liberation Serif', serif;-webkit-text-stroke:0.15px currentColor;">target</div><div class="r" style="left:0px;top:678px;width:1142px;height:2px;background:#c7c7c7;"></div><div class="r" style="left:0px;top:680px;width:1142px;height:30px;background:#ededed;"></div><div class="r" style="left:722px;top:680px;width:212px;height:30px;background:#c6efce;"></div><div class="t" style="left:4px;top:686.38px;font-size:22px;line-height:22px;color:#000;-webkit-text-stroke:0.3px currentColor;transform:scaleX(0.962);transform-origin:left center;">Cleaning Sponges</div><div class="t" style="left:-2493.8px;width:3000px;text-align:right;top:686.59px;font-size:21.75px;line-height:21.75px;color:#000;-webkit-text-stroke:0.3px currentColor;">$4.00</div><div class="t" style="left:-2284px;width:3000px;text-align:right;top:686.59px;font-size:21.75px;line-height:21.75px;color:#000;-webkit-text-stroke:0.3px currentColor;">$2.99</div><div class="t" style="left:-2072px;width:3000px;text-align:right;top:686.59px;font-size:21.75px;line-height:21.75px;color:#006100;-webkit-text-stroke:0.3px currentColor;">$1.01</div><div class="t" style="left:936px;top:694.45px;font-size:12px;line-height:12px;color:#000;font-family:'Liberation Serif', serif;-webkit-text-stroke:0.15px currentColor;">HOMEGOODS</div><div class="r" style="left:0px;top:710px;width:1142px;height:2px;background:#c7c7c7;"></div><div class="r" style="left:722px;top:712px;width:212px;height:32px;background:#c6efce;"></div><div class="t" style="left:4px;top:720.38px;font-size:22px;line-height:22px;color:#000;-webkit-text-stroke:0.3px currentColor;transform:scaleX(0.962);transform-origin:left center;">Paper Towel Stand</div><div class="t" style="left:-2493.8px;width:3000px;text-align:right;top:720.59px;font-size:21.75px;line-height:21.75px;color:#000;-webkit-text-stroke:0.3px currentColor;">$15.00</div><div class="t" style="left:-2284px;width:3000px;text-align:right;top:720.59px;font-size:21.75px;line-height:21.75px;color:#000;-webkit-text-stroke:0.3px currentColor;">$10.00</div><div class="t" style="left:-2072px;width:3000px;text-align:right;top:720.59px;font-size:21.75px;line-height:21.75px;color:#006100;-webkit-text-stroke:0.3px currentColor;">$5.00</div><div class="r" style="left:934px;top:712px;width:208px;height:32px;overflow:hidden"><div class="t" style="left:2px;top:-5.55px;font-size:12px;line-height:12px;color:#000;font-family:'Liberation Serif', serif;-webkit-text-stroke:0.15px currentColor;">https://www.target.com/p/gold-plated-</div><div class="t" style="left:2px;top:13.95px;font-size:12px;line-height:12px;color:#000;font-family:'Liberation Serif', serif;-webkit-text-stroke:0.15px currentColor;">paper-towel-holder-threshold-8482/-/A-</div></div><div class="r" style="left:0px;top:744px;width:1142px;height:2px;background:#c7c7c7;"></div><div class="r" style="left:0px;top:746px;width:1142px;height:30px;background:#ededed;"></div><div class="t" style="left:4px;top:752.38px;font-size:22px;line-height:22px;color:#000;-webkit-text-stroke:0.3px currentColor;transform:scaleX(0.962);transform-origin:left center;">Paper Towels</div><div class="t" style="left:-2493.8px;width:3000px;text-align:right;top:752.59px;font-size:21.75px;line-height:21.75px;color:#000;-webkit-text-stroke:0.3px currentColor;">$16.99</div><div class="t" style="left:-2284px;width:3000px;text-align:right;top:752.59px;font-size:21.75px;line-height:21.75px;color:#000;-webkit-text-stroke:0.3px currentColor;">$16.99</div><div class="t" style="left:-2072px;width:3000px;text-align:right;top:752.59px;font-size:21.75px;line-height:21.75px;color:#000;-webkit-text-stroke:0.3px currentColor;">$0.00</div><div class="t" style="left:936px;top:760.45px;font-size:12px;line-height:12px;color:#000;font-family:'Liberation Serif', serif;-webkit-text-stroke:0.15px currentColor;">Costco</div><div class="r" style="left:0px;top:776px;width:1142px;height:2px;background:#c7c7c7;"></div><div class="r" style="left:1142px;top:64px;width:2px;height:278px;background:#000;"></div><div class="r" style="left:1142px;top:372px;width:2px;height:406px;background:#000;"></div><div class="r" style="left:0px;top:776px;width:1144px;height:2px;background:#000;"></div><div class="r" style="left:0px;top:808px;width:1144px;height:2px;background:#000;"></div><div class="r" style="left:0px;top:810px;width:1142px;height:30px;background:#bfbfbf;"></div><div class="r" style="left:0px;top:840px;width:1144px;height:4px;background:#000;"></div><div class="t" style="left:-930px;width:3000px;text-align:center;top:816.38px;font-size:22px;line-height:22px;color:#fff;font-weight:700;font-style:italic;transform:scaleX(0.9534);transform-origin:center center;">LIVING ROOM</div><div class="r" style="left:0px;top:844px;width:1142px;height:30px;background:#d8d8d8;"></div><div class="r" style="left:0px;top:874px;width:1144px;height:2px;background:#000;"></div><div class="t" style="left:-1355.5px;width:3000px;text-align:center;top:849.18px;font-size:21.64px;line-height:21.64px;color:#fff;font-weight:700;">Item</div><div class="r" style="left:254.5px;top:844px;width:33.5px;height:29.5px;background:linear-gradient(#fdfdfd,#f1f1f1);border:1.5px solid #7f7f7f;box-sizing:border-box;border-radius:0 0 3px 3px;"></div><div class="r" style="left:262.5px;top:855px;width:17.0px;height:10.5px;background:#7b7b7b;clip-path:polygon(0 0,100% 0,50% 100%);"></div><div class="t" style="left:-1098.5px;width:3000px;text-align:center;top:850.42px;font-size:20.18px;line-height:20.18px;color:#fff;font-weight:700;">Budgeted Cost</div><div class="r" style="left:478px;top:844px;width:33.5px;height:29.5px;background:linear-gradient(#fdfdfd,#f1f1f1);border:1.5px solid #7f7f7f;box-sizing:border-box;border-radius:0 0 3px 3px;"></div><div class="r" style="left:486px;top:855px;width:17px;height:10.5px;background:#7b7b7b;clip-path:polygon(0 0,100% 0,50% 100%);"></div><div class="t" style="left:-881.5px;width:3000px;text-align:center;top:850.51px;font-size:20.07px;line-height:20.07px;color:#fff;font-weight:700;">Actual Cost</div><div class="r" style="left:688.5px;top:844px;width:33.5px;height:29.5px;background:linear-gradient(#fdfdfd,#f1f1f1);border:1.5px solid #7f7f7f;box-sizing:border-box;border-radius:0 0 3px 3px;"></div><div class="r" style="left:696.5px;top:855px;width:17.0px;height:10.5px;background:#7b7b7b;clip-path:polygon(0 0,100% 0,50% 100%);"></div><div class="t" style="left:-671.5px;width:3000px;text-align:center;top:849.84px;font-size:20.86px;line-height:20.86px;color:#fff;font-weight:700;">Difference</div><div class="r" style="left:898.5px;top:844px;width:33.5px;height:29.5px;background:linear-gradient(#fdfdfd,#f1f1f1);border:1.5px solid #7f7f7f;box-sizing:border-box;border-radius:0 0 3px 3px;"></div><div class="r" style="left:906.5px;top:855px;width:17.0px;height:10.5px;background:#7b7b7b;clip-path:polygon(0 0,100% 0,50% 100%);"></div><div class="t" style="left:-461.5px;width:3000px;text-align:center;top:851.44px;font-size:18.97px;line-height:18.97px;color:#fff;font-weight:700;">Link</div><div class="r" style="left:1108.5px;top:844px;width:33.5px;height:29.5px;background:linear-gradient(#fdfdfd,#f1f1f1);border:1.5px solid #7f7f7f;box-sizing:border-box;border-radius:0 0 3px 3px;"></div><div class="r" style="left:1116.5px;top:855px;width:17.0px;height:10.5px;background:#7b7b7b;clip-path:polygon(0 0,100% 0,50% 100%);"></div><div class="r" style="left:0px;top:876px;width:1142px;height:30px;background:#ededed;"></div><div class="r" style="left:722px;top:876px;width:212px;height:30px;background:#c6efce;"></div><div class="t" style="left:4px;top:882.38px;font-size:22px;line-height:22px;color:#000;-webkit-text-stroke:0.3px currentColor;transform:scaleX(0.962);transform-origin:left center;">Couch</div><div class="t" style="left:-2493.8px;width:3000px;text-align:right;top:882.59px;font-size:21.75px;line-height:21.75px;color:#000;-webkit-text-stroke:0.3px currentColor;">$1,500.00</div><div class="t" style="left:-2284px;width:3000px;text-align:right;top:882.59px;font-size:21.75px;line-height:21.75px;color:#000;-webkit-text-stroke:0.3px currentColor;">$1,200.00</div><div class="t" style="left:-2072px;width:3000px;text-align:right;top:882.59px;font-size:21.75px;line-height:21.75px;color:#006100;-webkit-text-stroke:0.3px currentColor;">$300.00</div><div class="t" style="left:936px;top:890.45px;font-size:12px;line-height:12px;color:#000;font-family:'Liberation Serif', serif;-webkit-text-stroke:0.15px currentColor;">Ashleys</div><div class="r" style="left:0px;top:906px;width:1142px;height:2px;background:#c7c7c7;"></div><div class="r" style="left:722px;top:908px;width:212px;height:32px;background:#c6efce;"></div><div class="t" style="left:4px;top:916.38px;font-size:22px;line-height:22px;color:#000;-webkit-text-stroke:0.3px currentColor;transform:scaleX(0.962);transform-origin:left center;">Coffee Table</div><div class="t" style="left:-2493.8px;width:3000px;text-align:right;top:916.59px;font-size:21.75px;line-height:21.75px;color:#000;-webkit-text-stroke:0.3px currentColor;">$400.00</div><div class="t" style="left:-2284px;width:3000px;text-align:right;top:916.59px;font-size:21.75px;line-height:21.75px;color:#000;-webkit-text-stroke:0.3px currentColor;">$399.00</div><div class="t" style="left:-2072px;width:3000px;text-align:right;top:916.59px;font-size:21.75px;line-height:21.75px;color:#006100;-webkit-text-stroke:0.3px currentColor;">$1.00</div><div class="r" style="left:934px;top:908px;width:208px;height:32px;overflow:hidden"><div class="t" style="left:2px;top:-5.55px;font-size:12px;line-height:12px;color:#000;font-family:'Liberation Serif', serif;-webkit-text-stroke:0.15px currentColor;">https://www.amazon.com/Statements-</div><div class="t" style="left:2px;top:13.95px;font-size:12px;line-height:12px;color:#000;font-family:'Liberation Serif', serif;-webkit-text-stroke:0.15px currentColor;">MJ411-Square-Coffee-</div></div><div class="r" style="left:0px;top:940px;width:1142px;height:2px;background:#c7c7c7;"></div><div class="r" style="left:0px;top:942px;width:1142px;height:38px;background:#ededed;"></div><div class="r" style="left:722px;top:942px;width:212px;height:38px;background:#c6efce;"></div><div class="t" style="left:4px;top:956.38px;font-size:22px;line-height:22px;color:#000;-webkit-text-stroke:0.3px currentColor;transform:scaleX(0.962);transform-origin:left center;">TV</div><div class="t" style="left:-2493.8px;width:3000px;text-align:right;top:956.59px;font-size:21.75px;line-height:21.75px;color:#000;-webkit-text-stroke:0.3px currentColor;">$400.00</div><div class="t" style="left:-2284px;width:3000px;text-align:right;top:956.59px;font-size:21.75px;line-height:21.75px;color:#000;-webkit-text-stroke:0.3px currentColor;">$279.00</div><div class="t" style="left:-2072px;width:3000px;text-align:right;top:956.59px;font-size:21.75px;line-height:21.75px;color:#006100;-webkit-text-stroke:0.3px currentColor;">$121.00</div><div class="r" style="left:934px;top:942px;width:208px;height:38px;overflow:hidden"><div class="t" style="left:2px;top:0.45px;font-size:12px;line-height:12px;color:#000;font-family:'Liberation Serif', serif;-webkit-text-stroke:0.15px currentColor;">https://www.amazon.com/TCL-55S425-</div><div class="t" style="left:2px;top:19.95px;font-size:12px;line-height:12px;color:#000;font-family:'Liberation Serif', serif;-webkit-text-stroke:0.15px currentColor;">inch-Smart-</div></div><div class="r" style="left:0px;top:980px;width:1142px;height:2px;background:#c7c7c7;"></div><div class="t" style="left:4px;top:987.38px;font-size:22px;line-height:22px;color:#000;-webkit-text-stroke:0.3px currentColor;transform:scaleX(0.962);transform-origin:left center;">TV Stand</div><div class="t" style="left:-2072px;width:3000px;text-align:right;top:987.59px;font-size:21.75px;line-height:21.75px;color:#000;-webkit-text-stroke:0.3px currentColor;">$0.00</div><div class="r" style="left:0px;top:1011px;width:1142px;height:2px;background:#c7c7c7;"></div><div class="r" style="left:1142px;top:808px;width:2px;height:212px;background:#000;"></div><div class="r" style="left:1134px;top:768px;width:8px;height:8px;background:#4a7bc4;clip-path:polygon(100% 0,100% 100%,0 100%,0 60%,60% 60%,60% 0);"></div><div class="r" style="left:1610px;top:442px;width:128px;height:46px;background:transparent;border:4px solid #217346;box-sizing:border-box;"></div><div class="r" style="left:1728px;top:478px;width:14px;height:14px;background:#fff;"></div><div class="r" style="left:1730px;top:480px;width:10px;height:10px;background:#217346;"></div></div><div class="r" style="left:0px;top:1346px;width:2560px;height:52px;background:#ececec;"></div><div class="r" style="left:0px;top:1346px;width:2560px;height:1.5px;background:#cfcfcf;"></div><div class="r" style="left:121px;top:1346px;width:145px;height:45px;background:#fff;border-radius:0 0 6px 6px;box-shadow:0 1.5px 1.5px rgba(0,0,0,0.25)"></div><div class="t" style="left:154.5px;top:1360.88px;font-size:23.18px;line-height:23.18px;color:#217346;font-weight:700;">Sheet1</div><svg class="s" style="left:29px;top:1362px;" width="15" height="21" viewBox="0 0 15 21"><path d="M14.5 0V20.5L0 10.25Z" fill="#b0b0b0"/></svg><svg class="s" style="left:76px;top:1362px;" width="15" height="21" viewBox="0 0 15 21"><path d="M0.5 0V20.5L14.5 10.25Z" fill="#b0b0b0"/></svg><div class="r" style="left:295.5px;top:1369.2px;width:20.5px;height:3.7999999999999545px;background:#505050;"></div><div class="r" style="left:303.9px;top:1361px;width:3.8000000000000114px;height:20.5px;background:#505050;"></div><div class="r" style="left:342px;top:1350px;width:2px;height:38px;background:#d0d0d0;"></div><div class="r" style="left:0px;top:1398px;width:2560px;height:2px;background:#b0b0b0;"></div><div class="r" style="left:0px;top:1400px;width:2560px;height:40px;background:linear-gradient(#e3e3e3,#d6d6d6);"></div><div class="t" style="left:50px;top:1411.79px;font-size:23.28px;line-height:23.28px;color:#555;">Ready</div><div class="r" style="left:1996px;top:1400px;width:74px;height:40px;background:#a2a2a2;"></div><svg class="s" style="left:2019px;top:1407px;" width="28" height="28" viewBox="0 0 28 28"><rect x="2.2" y="2.1" width="24.5" height="24.6" rx="2" fill="none" stroke="#fff" stroke-width="2.2"/><path d="M10.3 2V26.8M18.5 2V26.8M2 10.2H26.8M2 18.3H26.8" stroke="#fff" stroke-width="2"/></svg><svg class="s" style="left:2090px;top:1407px;" width="30" height="28" viewBox="0 0 30 28"><rect x="2.1" y="2.4" width="25.4" height="24" rx="1.5" fill="none" stroke="#555" stroke-width="2.2"/><rect x="7.8" y="6.3" width="14" height="16.2" fill="none" stroke="#555" stroke-width="1.8"/><path d="M11 11H18.5M11 14.5H18.5M11 18H18.5" stroke="#555" stroke-width="1.8"/></svg><div class="r" style="left:2155.5px;top:1419.5px;width:16.5px;height:3.5px;background:#666;"></div><div class="r" style="left:2187.5px;top:1418px;width:196.5px;height:7.5px;background:#8c8c8c;border-radius:4px;"></div><div class="r" style="left:2274.5px;top:1410px;width:22px;height:22px;border-radius:50%;background:#f7f7f7;box-shadow:0 0 1.5px rgba(0,0,0,0.5)"></div><div class="r" style="left:2399.5px;top:1419.5px;width:16.5px;height:3.5px;background:#666;"></div><div class="r" style="left:2406.2px;top:1413px;width:3.100000000000364px;height:16.5px;background:#666;"></div><div class="t" style="left:2452.5px;top:1413.30px;font-size:22.09px;line-height:22.09px;color:#555;">101%</div><svg class="s" style="left:0px;top:1430px;" width="10" height="10" viewBox="0 0 10 10"><path d="M0 0V10H10A10 10 0 0 1 0 0Z" fill="#1c2e3b"/></svg><svg class="s" style="left:2550px;top:1430px;" width="10" height="10" viewBox="0 0 10 10"><path d="M10 0V10H0A10 10 0 0 0 10 0Z" fill="#1c2e3b"/></svg></body></html>
